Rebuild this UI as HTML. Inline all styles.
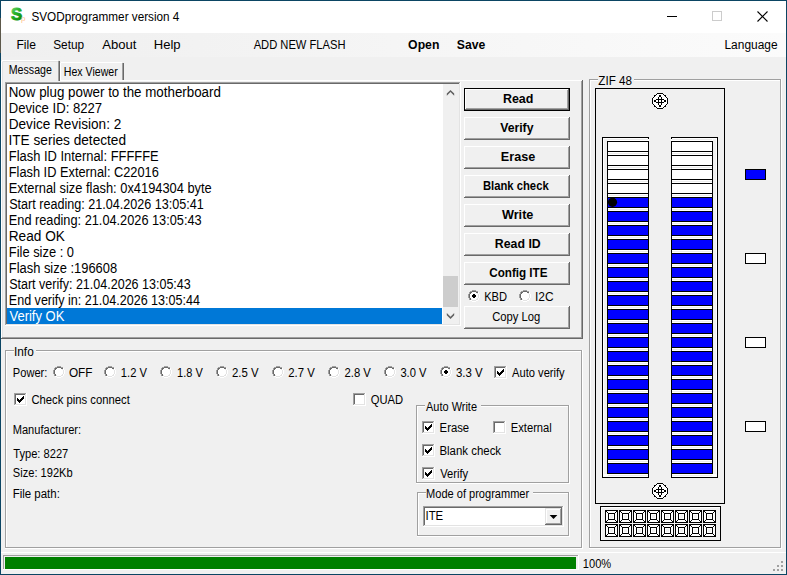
<!DOCTYPE html>
<html><head><meta charset="utf-8"><title>SVODprogrammer version 4</title>
<style>
html,body{margin:0;padding:0;background:#f0f0f0;overflow:hidden;}
svg{display:block;}
text{font-family:"Liberation Sans", sans-serif;}
</style></head><body>
<svg width="787" height="575" viewBox="0 0 787 575" shape-rendering="crispEdges">
<rect x="0" y="0" width="787" height="575" fill="#f0f0f0"/>
<rect x="1" y="1" width="785" height="32" fill="#ffffff"/>
<defs><linearGradient id="mb" x1="0" x2="1" y1="0" y2="0"><stop offset="0" stop-color="#efefef"/><stop offset="1" stop-color="#fbfbfb"/></linearGradient><linearGradient id="sg" x1="0" x2="0.6" y1="0" y2="1"><stop offset="0" stop-color="#8fe08f"/><stop offset="0.45" stop-color="#2cb52c"/><stop offset="1" stop-color="#0a8a0a"/></linearGradient></defs>
<rect x="1" y="33" width="785" height="24" fill="url(#mb)"/>
<rect x="0" y="0" width="787" height="1" fill="#0b4563"/>
<rect x="0" y="574" width="787" height="1" fill="#0b4563"/>
<rect x="786" y="0" width="1" height="575" fill="#0b4563"/>
<rect x="0" y="0" width="1" height="575" fill="#0b4563"/>
<rect x="0" y="18" width="1" height="35" fill="#5c584a"/>
<text x="11" y="20.2" font-size="16.5" font-weight="bold" textLength="11.2" lengthAdjust="spacingAndGlyphs" fill="url(#sg)" stroke="url(#sg)" stroke-width="0.9">S</text>
<text x="21" y="21" font-size="8" fill="#ffc48a">p</text>
<rect x="667" y="16" width="10" height="1" fill="#000"/>
<rect x="712.5" y="11.5" width="9" height="9" fill="none" stroke="#cccccc" stroke-width="1"/>
<path d="M757.5 11.5 L767.5 21.5 M767.5 11.5 L757.5 21.5" stroke="#000" stroke-width="1.1" fill="none" shape-rendering="geometricPrecision"/>
<rect x="60" y="80" width="522" height="1" fill="#ffffff"/>
<rect x="1" y="61" width="1" height="277" fill="#ffffff"/>
<rect x="2" y="62" width="1" height="275" fill="#e3e3e3"/>
<rect x="582" y="80" width="1" height="259" fill="#696969"/>
<rect x="581" y="81" width="1" height="257" fill="#a0a0a0"/>
<rect x="1" y="338" width="582" height="1" fill="#696969"/>
<rect x="2" y="337" width="580" height="1" fill="#a0a0a0"/>
<rect x="2" y="60" width="56" height="1" fill="#ffffff"/>
<rect x="3" y="61" width="55" height="1" fill="#e3e3e3"/>
<rect x="59" y="61" width="1" height="20" fill="#696969"/>
<rect x="58" y="61" width="1" height="20" fill="#a0a0a0"/>
<rect x="61" y="62" width="61" height="1" fill="#ffffff"/>
<rect x="60" y="63" width="1" height="17" fill="#ffffff"/>
<rect x="123" y="63" width="1" height="17" fill="#696969"/>
<rect x="122" y="63" width="1" height="17" fill="#a0a0a0"/>
<rect x="5" y="82" width="455" height="1" fill="#a0a0a0"/>
<rect x="5" y="82" width="1" height="243" fill="#a0a0a0"/>
<rect x="6" y="83" width="453" height="1" fill="#696969"/>
<rect x="6" y="83" width="1" height="241" fill="#696969"/>
<rect x="5" y="325" width="456" height="1" fill="#ffffff"/>
<rect x="460" y="82" width="1" height="244" fill="#ffffff"/>
<rect x="6" y="324" width="454" height="1" fill="#e3e3e3"/>
<rect x="459" y="83" width="1" height="242" fill="#e3e3e3"/>
<rect x="7" y="84" width="452" height="240" fill="#ffffff"/>
<rect x="443" y="84" width="16" height="240" fill="#f0f0f0"/>
<rect x="443" y="276" width="15" height="31" fill="#cdcdcd"/>
<path d="M446.8 93.6 L450.5 89.9 L454.2 93.6 L454.2 95.8 L450.5 92.1 L446.8 95.8 Z" fill="#606060" shape-rendering="geometricPrecision"/>
<path d="M446.8 313 L450.5 316.7 L454.2 313 L454.2 315.2 L450.5 318.9 L446.8 315.2 Z" fill="#606060" shape-rendering="geometricPrecision"/>
<rect x="7" y="308" width="435" height="16" fill="#0078d7"/>
<rect x="464" y="88" width="106" height="23" fill="#f0f0f0"/>
<rect x="464" y="88" width="106" height="1" fill="#000"/>
<rect x="464" y="110" width="106" height="1" fill="#000"/>
<rect x="464" y="88" width="1" height="23" fill="#000"/>
<rect x="569" y="88" width="1" height="23" fill="#000"/>
<rect x="465" y="89" width="103" height="1" fill="#ffffff"/>
<rect x="465" y="89" width="1" height="20" fill="#ffffff"/>
<rect x="466" y="90" width="101" height="1" fill="#f0f0f0"/>
<rect x="466" y="90" width="1" height="18" fill="#f0f0f0"/>
<rect x="465" y="109" width="104" height="1" fill="#696969"/>
<rect x="568" y="89" width="1" height="21" fill="#696969"/>
<rect x="466" y="108" width="102" height="1" fill="#a0a0a0"/>
<rect x="567" y="90" width="1" height="19" fill="#a0a0a0"/>
<rect x="464" y="117" width="106" height="23" fill="#f0f0f0"/>
<rect x="464" y="117" width="105" height="1" fill="#ffffff"/>
<rect x="464" y="117" width="1" height="22" fill="#ffffff"/>
<rect x="465" y="118" width="103" height="1" fill="#f0f0f0"/>
<rect x="465" y="118" width="1" height="20" fill="#f0f0f0"/>
<rect x="464" y="139" width="106" height="1" fill="#696969"/>
<rect x="569" y="117" width="1" height="23" fill="#696969"/>
<rect x="465" y="138" width="104" height="1" fill="#a0a0a0"/>
<rect x="568" y="118" width="1" height="21" fill="#a0a0a0"/>
<rect x="464" y="146" width="106" height="23" fill="#f0f0f0"/>
<rect x="464" y="146" width="105" height="1" fill="#ffffff"/>
<rect x="464" y="146" width="1" height="22" fill="#ffffff"/>
<rect x="465" y="147" width="103" height="1" fill="#f0f0f0"/>
<rect x="465" y="147" width="1" height="20" fill="#f0f0f0"/>
<rect x="464" y="168" width="106" height="1" fill="#696969"/>
<rect x="569" y="146" width="1" height="23" fill="#696969"/>
<rect x="465" y="167" width="104" height="1" fill="#a0a0a0"/>
<rect x="568" y="147" width="1" height="21" fill="#a0a0a0"/>
<rect x="464" y="175" width="106" height="23" fill="#f0f0f0"/>
<rect x="464" y="175" width="105" height="1" fill="#ffffff"/>
<rect x="464" y="175" width="1" height="22" fill="#ffffff"/>
<rect x="465" y="176" width="103" height="1" fill="#f0f0f0"/>
<rect x="465" y="176" width="1" height="20" fill="#f0f0f0"/>
<rect x="464" y="197" width="106" height="1" fill="#696969"/>
<rect x="569" y="175" width="1" height="23" fill="#696969"/>
<rect x="465" y="196" width="104" height="1" fill="#a0a0a0"/>
<rect x="568" y="176" width="1" height="21" fill="#a0a0a0"/>
<rect x="464" y="204" width="106" height="23" fill="#f0f0f0"/>
<rect x="464" y="204" width="105" height="1" fill="#ffffff"/>
<rect x="464" y="204" width="1" height="22" fill="#ffffff"/>
<rect x="465" y="205" width="103" height="1" fill="#f0f0f0"/>
<rect x="465" y="205" width="1" height="20" fill="#f0f0f0"/>
<rect x="464" y="226" width="106" height="1" fill="#696969"/>
<rect x="569" y="204" width="1" height="23" fill="#696969"/>
<rect x="465" y="225" width="104" height="1" fill="#a0a0a0"/>
<rect x="568" y="205" width="1" height="21" fill="#a0a0a0"/>
<rect x="464" y="233" width="106" height="23" fill="#f0f0f0"/>
<rect x="464" y="233" width="105" height="1" fill="#ffffff"/>
<rect x="464" y="233" width="1" height="22" fill="#ffffff"/>
<rect x="465" y="234" width="103" height="1" fill="#f0f0f0"/>
<rect x="465" y="234" width="1" height="20" fill="#f0f0f0"/>
<rect x="464" y="255" width="106" height="1" fill="#696969"/>
<rect x="569" y="233" width="1" height="23" fill="#696969"/>
<rect x="465" y="254" width="104" height="1" fill="#a0a0a0"/>
<rect x="568" y="234" width="1" height="21" fill="#a0a0a0"/>
<rect x="464" y="262" width="106" height="23" fill="#f0f0f0"/>
<rect x="464" y="262" width="105" height="1" fill="#ffffff"/>
<rect x="464" y="262" width="1" height="22" fill="#ffffff"/>
<rect x="465" y="263" width="103" height="1" fill="#f0f0f0"/>
<rect x="465" y="263" width="1" height="20" fill="#f0f0f0"/>
<rect x="464" y="284" width="106" height="1" fill="#696969"/>
<rect x="569" y="262" width="1" height="23" fill="#696969"/>
<rect x="465" y="283" width="104" height="1" fill="#a0a0a0"/>
<rect x="568" y="263" width="1" height="21" fill="#a0a0a0"/>
<g transform="translate(468,290)">
<rect x="4" y="0" width="1" height="1" fill="#a0a0a0"/>
<rect x="5" y="0" width="1" height="1" fill="#a0a0a0"/>
<rect x="6" y="0" width="1" height="1" fill="#a0a0a0"/>
<rect x="7" y="0" width="1" height="1" fill="#a0a0a0"/>
<rect x="2" y="1" width="1" height="1" fill="#a0a0a0"/>
<rect x="3" y="1" width="1" height="1" fill="#a0a0a0"/>
<rect x="8" y="1" width="1" height="1" fill="#a0a0a0"/>
<rect x="9" y="1" width="1" height="1" fill="#a0a0a0"/>
<rect x="1" y="2" width="1" height="1" fill="#a0a0a0"/>
<rect x="1" y="3" width="1" height="1" fill="#a0a0a0"/>
<rect x="0" y="4" width="1" height="1" fill="#a0a0a0"/>
<rect x="0" y="5" width="1" height="1" fill="#a0a0a0"/>
<rect x="0" y="6" width="1" height="1" fill="#a0a0a0"/>
<rect x="0" y="7" width="1" height="1" fill="#a0a0a0"/>
<rect x="1" y="8" width="1" height="1" fill="#a0a0a0"/>
<rect x="1" y="9" width="1" height="1" fill="#a0a0a0"/>
<rect x="10" y="2" width="1" height="1" fill="#ffffff"/>
<rect x="10" y="3" width="1" height="1" fill="#ffffff"/>
<rect x="11" y="4" width="1" height="1" fill="#ffffff"/>
<rect x="11" y="5" width="1" height="1" fill="#ffffff"/>
<rect x="11" y="6" width="1" height="1" fill="#ffffff"/>
<rect x="11" y="7" width="1" height="1" fill="#ffffff"/>
<rect x="10" y="8" width="1" height="1" fill="#ffffff"/>
<rect x="10" y="9" width="1" height="1" fill="#ffffff"/>
<rect x="2" y="10" width="1" height="1" fill="#ffffff"/>
<rect x="3" y="10" width="1" height="1" fill="#ffffff"/>
<rect x="8" y="10" width="1" height="1" fill="#ffffff"/>
<rect x="9" y="10" width="1" height="1" fill="#ffffff"/>
<rect x="4" y="11" width="1" height="1" fill="#ffffff"/>
<rect x="5" y="11" width="1" height="1" fill="#ffffff"/>
<rect x="6" y="11" width="1" height="1" fill="#ffffff"/>
<rect x="7" y="11" width="1" height="1" fill="#ffffff"/>
<rect x="4" y="1" width="1" height="1" fill="#696969"/>
<rect x="5" y="1" width="1" height="1" fill="#696969"/>
<rect x="6" y="1" width="1" height="1" fill="#696969"/>
<rect x="7" y="1" width="1" height="1" fill="#696969"/>
<rect x="2" y="2" width="1" height="1" fill="#696969"/>
<rect x="3" y="2" width="1" height="1" fill="#696969"/>
<rect x="8" y="2" width="1" height="1" fill="#696969"/>
<rect x="9" y="2" width="1" height="1" fill="#696969"/>
<rect x="2" y="3" width="1" height="1" fill="#696969"/>
<rect x="1" y="4" width="1" height="1" fill="#696969"/>
<rect x="1" y="5" width="1" height="1" fill="#696969"/>
<rect x="1" y="6" width="1" height="1" fill="#696969"/>
<rect x="1" y="7" width="1" height="1" fill="#696969"/>
<rect x="2" y="8" width="1" height="1" fill="#696969"/>
<rect x="2" y="9" width="1" height="1" fill="#696969"/>
<rect x="9" y="3" width="1" height="1" fill="#e3e3e3"/>
<rect x="10" y="4" width="1" height="1" fill="#e3e3e3"/>
<rect x="10" y="5" width="1" height="1" fill="#e3e3e3"/>
<rect x="10" y="6" width="1" height="1" fill="#e3e3e3"/>
<rect x="10" y="7" width="1" height="1" fill="#e3e3e3"/>
<rect x="9" y="8" width="1" height="1" fill="#e3e3e3"/>
<rect x="9" y="9" width="1" height="1" fill="#e3e3e3"/>
<rect x="8" y="9" width="1" height="1" fill="#e3e3e3"/>
<rect x="3" y="9" width="1" height="1" fill="#e3e3e3"/>
<rect x="4" y="10" width="1" height="1" fill="#e3e3e3"/>
<rect x="5" y="10" width="1" height="1" fill="#e3e3e3"/>
<rect x="6" y="10" width="1" height="1" fill="#e3e3e3"/>
<rect x="7" y="10" width="1" height="1" fill="#e3e3e3"/>
<rect x="3" y="3" width="6" height="6" fill="#ffffff"/>
<rect x="2" y="4" width="8" height="4" fill="#ffffff"/>
<rect x="4" y="2" width="4" height="8" fill="#ffffff"/>
<rect x="5" y="4" width="2" height="4" fill="#000"/><rect x="4" y="5" width="4" height="2" fill="#000"/>
</g>
<g transform="translate(519,290)">
<rect x="4" y="0" width="1" height="1" fill="#a0a0a0"/>
<rect x="5" y="0" width="1" height="1" fill="#a0a0a0"/>
<rect x="6" y="0" width="1" height="1" fill="#a0a0a0"/>
<rect x="7" y="0" width="1" height="1" fill="#a0a0a0"/>
<rect x="2" y="1" width="1" height="1" fill="#a0a0a0"/>
<rect x="3" y="1" width="1" height="1" fill="#a0a0a0"/>
<rect x="8" y="1" width="1" height="1" fill="#a0a0a0"/>
<rect x="9" y="1" width="1" height="1" fill="#a0a0a0"/>
<rect x="1" y="2" width="1" height="1" fill="#a0a0a0"/>
<rect x="1" y="3" width="1" height="1" fill="#a0a0a0"/>
<rect x="0" y="4" width="1" height="1" fill="#a0a0a0"/>
<rect x="0" y="5" width="1" height="1" fill="#a0a0a0"/>
<rect x="0" y="6" width="1" height="1" fill="#a0a0a0"/>
<rect x="0" y="7" width="1" height="1" fill="#a0a0a0"/>
<rect x="1" y="8" width="1" height="1" fill="#a0a0a0"/>
<rect x="1" y="9" width="1" height="1" fill="#a0a0a0"/>
<rect x="10" y="2" width="1" height="1" fill="#ffffff"/>
<rect x="10" y="3" width="1" height="1" fill="#ffffff"/>
<rect x="11" y="4" width="1" height="1" fill="#ffffff"/>
<rect x="11" y="5" width="1" height="1" fill="#ffffff"/>
<rect x="11" y="6" width="1" height="1" fill="#ffffff"/>
<rect x="11" y="7" width="1" height="1" fill="#ffffff"/>
<rect x="10" y="8" width="1" height="1" fill="#ffffff"/>
<rect x="10" y="9" width="1" height="1" fill="#ffffff"/>
<rect x="2" y="10" width="1" height="1" fill="#ffffff"/>
<rect x="3" y="10" width="1" height="1" fill="#ffffff"/>
<rect x="8" y="10" width="1" height="1" fill="#ffffff"/>
<rect x="9" y="10" width="1" height="1" fill="#ffffff"/>
<rect x="4" y="11" width="1" height="1" fill="#ffffff"/>
<rect x="5" y="11" width="1" height="1" fill="#ffffff"/>
<rect x="6" y="11" width="1" height="1" fill="#ffffff"/>
<rect x="7" y="11" width="1" height="1" fill="#ffffff"/>
<rect x="4" y="1" width="1" height="1" fill="#696969"/>
<rect x="5" y="1" width="1" height="1" fill="#696969"/>
<rect x="6" y="1" width="1" height="1" fill="#696969"/>
<rect x="7" y="1" width="1" height="1" fill="#696969"/>
<rect x="2" y="2" width="1" height="1" fill="#696969"/>
<rect x="3" y="2" width="1" height="1" fill="#696969"/>
<rect x="8" y="2" width="1" height="1" fill="#696969"/>
<rect x="9" y="2" width="1" height="1" fill="#696969"/>
<rect x="2" y="3" width="1" height="1" fill="#696969"/>
<rect x="1" y="4" width="1" height="1" fill="#696969"/>
<rect x="1" y="5" width="1" height="1" fill="#696969"/>
<rect x="1" y="6" width="1" height="1" fill="#696969"/>
<rect x="1" y="7" width="1" height="1" fill="#696969"/>
<rect x="2" y="8" width="1" height="1" fill="#696969"/>
<rect x="2" y="9" width="1" height="1" fill="#696969"/>
<rect x="9" y="3" width="1" height="1" fill="#e3e3e3"/>
<rect x="10" y="4" width="1" height="1" fill="#e3e3e3"/>
<rect x="10" y="5" width="1" height="1" fill="#e3e3e3"/>
<rect x="10" y="6" width="1" height="1" fill="#e3e3e3"/>
<rect x="10" y="7" width="1" height="1" fill="#e3e3e3"/>
<rect x="9" y="8" width="1" height="1" fill="#e3e3e3"/>
<rect x="9" y="9" width="1" height="1" fill="#e3e3e3"/>
<rect x="8" y="9" width="1" height="1" fill="#e3e3e3"/>
<rect x="3" y="9" width="1" height="1" fill="#e3e3e3"/>
<rect x="4" y="10" width="1" height="1" fill="#e3e3e3"/>
<rect x="5" y="10" width="1" height="1" fill="#e3e3e3"/>
<rect x="6" y="10" width="1" height="1" fill="#e3e3e3"/>
<rect x="7" y="10" width="1" height="1" fill="#e3e3e3"/>
<rect x="3" y="3" width="6" height="6" fill="#ffffff"/>
<rect x="2" y="4" width="8" height="4" fill="#ffffff"/>
<rect x="4" y="2" width="4" height="8" fill="#ffffff"/>
</g>
<rect x="464" y="306" width="106" height="23" fill="#f0f0f0"/>
<rect x="464" y="306" width="105" height="1" fill="#ffffff"/>
<rect x="464" y="306" width="1" height="22" fill="#ffffff"/>
<rect x="465" y="307" width="103" height="1" fill="#f0f0f0"/>
<rect x="465" y="307" width="1" height="20" fill="#f0f0f0"/>
<rect x="464" y="328" width="106" height="1" fill="#696969"/>
<rect x="569" y="306" width="1" height="23" fill="#696969"/>
<rect x="465" y="327" width="104" height="1" fill="#a0a0a0"/>
<rect x="568" y="307" width="1" height="21" fill="#a0a0a0"/>
<rect x="5" y="350" width="9" height="1" fill="#a0a0a0"/>
<rect x="36" y="350" width="546" height="1" fill="#a0a0a0"/>
<rect x="6" y="351" width="8" height="1" fill="#ffffff"/>
<rect x="36" y="351" width="545" height="1" fill="#ffffff"/>
<rect x="5" y="350" width="1" height="198" fill="#a0a0a0"/>
<rect x="6" y="351" width="1" height="196" fill="#ffffff"/>
<rect x="581" y="350" width="1" height="198" fill="#a0a0a0"/>
<rect x="582" y="350" width="1" height="199" fill="#ffffff"/>
<rect x="5" y="547" width="577" height="1" fill="#a0a0a0"/>
<rect x="5" y="548" width="578" height="1" fill="#ffffff"/>
<g transform="translate(53,366)">
<rect x="4" y="0" width="1" height="1" fill="#a0a0a0"/>
<rect x="5" y="0" width="1" height="1" fill="#a0a0a0"/>
<rect x="6" y="0" width="1" height="1" fill="#a0a0a0"/>
<rect x="7" y="0" width="1" height="1" fill="#a0a0a0"/>
<rect x="2" y="1" width="1" height="1" fill="#a0a0a0"/>
<rect x="3" y="1" width="1" height="1" fill="#a0a0a0"/>
<rect x="8" y="1" width="1" height="1" fill="#a0a0a0"/>
<rect x="9" y="1" width="1" height="1" fill="#a0a0a0"/>
<rect x="1" y="2" width="1" height="1" fill="#a0a0a0"/>
<rect x="1" y="3" width="1" height="1" fill="#a0a0a0"/>
<rect x="0" y="4" width="1" height="1" fill="#a0a0a0"/>
<rect x="0" y="5" width="1" height="1" fill="#a0a0a0"/>
<rect x="0" y="6" width="1" height="1" fill="#a0a0a0"/>
<rect x="0" y="7" width="1" height="1" fill="#a0a0a0"/>
<rect x="1" y="8" width="1" height="1" fill="#a0a0a0"/>
<rect x="1" y="9" width="1" height="1" fill="#a0a0a0"/>
<rect x="10" y="2" width="1" height="1" fill="#ffffff"/>
<rect x="10" y="3" width="1" height="1" fill="#ffffff"/>
<rect x="11" y="4" width="1" height="1" fill="#ffffff"/>
<rect x="11" y="5" width="1" height="1" fill="#ffffff"/>
<rect x="11" y="6" width="1" height="1" fill="#ffffff"/>
<rect x="11" y="7" width="1" height="1" fill="#ffffff"/>
<rect x="10" y="8" width="1" height="1" fill="#ffffff"/>
<rect x="10" y="9" width="1" height="1" fill="#ffffff"/>
<rect x="2" y="10" width="1" height="1" fill="#ffffff"/>
<rect x="3" y="10" width="1" height="1" fill="#ffffff"/>
<rect x="8" y="10" width="1" height="1" fill="#ffffff"/>
<rect x="9" y="10" width="1" height="1" fill="#ffffff"/>
<rect x="4" y="11" width="1" height="1" fill="#ffffff"/>
<rect x="5" y="11" width="1" height="1" fill="#ffffff"/>
<rect x="6" y="11" width="1" height="1" fill="#ffffff"/>
<rect x="7" y="11" width="1" height="1" fill="#ffffff"/>
<rect x="4" y="1" width="1" height="1" fill="#696969"/>
<rect x="5" y="1" width="1" height="1" fill="#696969"/>
<rect x="6" y="1" width="1" height="1" fill="#696969"/>
<rect x="7" y="1" width="1" height="1" fill="#696969"/>
<rect x="2" y="2" width="1" height="1" fill="#696969"/>
<rect x="3" y="2" width="1" height="1" fill="#696969"/>
<rect x="8" y="2" width="1" height="1" fill="#696969"/>
<rect x="9" y="2" width="1" height="1" fill="#696969"/>
<rect x="2" y="3" width="1" height="1" fill="#696969"/>
<rect x="1" y="4" width="1" height="1" fill="#696969"/>
<rect x="1" y="5" width="1" height="1" fill="#696969"/>
<rect x="1" y="6" width="1" height="1" fill="#696969"/>
<rect x="1" y="7" width="1" height="1" fill="#696969"/>
<rect x="2" y="8" width="1" height="1" fill="#696969"/>
<rect x="2" y="9" width="1" height="1" fill="#696969"/>
<rect x="9" y="3" width="1" height="1" fill="#e3e3e3"/>
<rect x="10" y="4" width="1" height="1" fill="#e3e3e3"/>
<rect x="10" y="5" width="1" height="1" fill="#e3e3e3"/>
<rect x="10" y="6" width="1" height="1" fill="#e3e3e3"/>
<rect x="10" y="7" width="1" height="1" fill="#e3e3e3"/>
<rect x="9" y="8" width="1" height="1" fill="#e3e3e3"/>
<rect x="9" y="9" width="1" height="1" fill="#e3e3e3"/>
<rect x="8" y="9" width="1" height="1" fill="#e3e3e3"/>
<rect x="3" y="9" width="1" height="1" fill="#e3e3e3"/>
<rect x="4" y="10" width="1" height="1" fill="#e3e3e3"/>
<rect x="5" y="10" width="1" height="1" fill="#e3e3e3"/>
<rect x="6" y="10" width="1" height="1" fill="#e3e3e3"/>
<rect x="7" y="10" width="1" height="1" fill="#e3e3e3"/>
<rect x="3" y="3" width="6" height="6" fill="#ffffff"/>
<rect x="2" y="4" width="8" height="4" fill="#ffffff"/>
<rect x="4" y="2" width="4" height="8" fill="#ffffff"/>
</g>
<g transform="translate(104,366)">
<rect x="4" y="0" width="1" height="1" fill="#a0a0a0"/>
<rect x="5" y="0" width="1" height="1" fill="#a0a0a0"/>
<rect x="6" y="0" width="1" height="1" fill="#a0a0a0"/>
<rect x="7" y="0" width="1" height="1" fill="#a0a0a0"/>
<rect x="2" y="1" width="1" height="1" fill="#a0a0a0"/>
<rect x="3" y="1" width="1" height="1" fill="#a0a0a0"/>
<rect x="8" y="1" width="1" height="1" fill="#a0a0a0"/>
<rect x="9" y="1" width="1" height="1" fill="#a0a0a0"/>
<rect x="1" y="2" width="1" height="1" fill="#a0a0a0"/>
<rect x="1" y="3" width="1" height="1" fill="#a0a0a0"/>
<rect x="0" y="4" width="1" height="1" fill="#a0a0a0"/>
<rect x="0" y="5" width="1" height="1" fill="#a0a0a0"/>
<rect x="0" y="6" width="1" height="1" fill="#a0a0a0"/>
<rect x="0" y="7" width="1" height="1" fill="#a0a0a0"/>
<rect x="1" y="8" width="1" height="1" fill="#a0a0a0"/>
<rect x="1" y="9" width="1" height="1" fill="#a0a0a0"/>
<rect x="10" y="2" width="1" height="1" fill="#ffffff"/>
<rect x="10" y="3" width="1" height="1" fill="#ffffff"/>
<rect x="11" y="4" width="1" height="1" fill="#ffffff"/>
<rect x="11" y="5" width="1" height="1" fill="#ffffff"/>
<rect x="11" y="6" width="1" height="1" fill="#ffffff"/>
<rect x="11" y="7" width="1" height="1" fill="#ffffff"/>
<rect x="10" y="8" width="1" height="1" fill="#ffffff"/>
<rect x="10" y="9" width="1" height="1" fill="#ffffff"/>
<rect x="2" y="10" width="1" height="1" fill="#ffffff"/>
<rect x="3" y="10" width="1" height="1" fill="#ffffff"/>
<rect x="8" y="10" width="1" height="1" fill="#ffffff"/>
<rect x="9" y="10" width="1" height="1" fill="#ffffff"/>
<rect x="4" y="11" width="1" height="1" fill="#ffffff"/>
<rect x="5" y="11" width="1" height="1" fill="#ffffff"/>
<rect x="6" y="11" width="1" height="1" fill="#ffffff"/>
<rect x="7" y="11" width="1" height="1" fill="#ffffff"/>
<rect x="4" y="1" width="1" height="1" fill="#696969"/>
<rect x="5" y="1" width="1" height="1" fill="#696969"/>
<rect x="6" y="1" width="1" height="1" fill="#696969"/>
<rect x="7" y="1" width="1" height="1" fill="#696969"/>
<rect x="2" y="2" width="1" height="1" fill="#696969"/>
<rect x="3" y="2" width="1" height="1" fill="#696969"/>
<rect x="8" y="2" width="1" height="1" fill="#696969"/>
<rect x="9" y="2" width="1" height="1" fill="#696969"/>
<rect x="2" y="3" width="1" height="1" fill="#696969"/>
<rect x="1" y="4" width="1" height="1" fill="#696969"/>
<rect x="1" y="5" width="1" height="1" fill="#696969"/>
<rect x="1" y="6" width="1" height="1" fill="#696969"/>
<rect x="1" y="7" width="1" height="1" fill="#696969"/>
<rect x="2" y="8" width="1" height="1" fill="#696969"/>
<rect x="2" y="9" width="1" height="1" fill="#696969"/>
<rect x="9" y="3" width="1" height="1" fill="#e3e3e3"/>
<rect x="10" y="4" width="1" height="1" fill="#e3e3e3"/>
<rect x="10" y="5" width="1" height="1" fill="#e3e3e3"/>
<rect x="10" y="6" width="1" height="1" fill="#e3e3e3"/>
<rect x="10" y="7" width="1" height="1" fill="#e3e3e3"/>
<rect x="9" y="8" width="1" height="1" fill="#e3e3e3"/>
<rect x="9" y="9" width="1" height="1" fill="#e3e3e3"/>
<rect x="8" y="9" width="1" height="1" fill="#e3e3e3"/>
<rect x="3" y="9" width="1" height="1" fill="#e3e3e3"/>
<rect x="4" y="10" width="1" height="1" fill="#e3e3e3"/>
<rect x="5" y="10" width="1" height="1" fill="#e3e3e3"/>
<rect x="6" y="10" width="1" height="1" fill="#e3e3e3"/>
<rect x="7" y="10" width="1" height="1" fill="#e3e3e3"/>
<rect x="3" y="3" width="6" height="6" fill="#ffffff"/>
<rect x="2" y="4" width="8" height="4" fill="#ffffff"/>
<rect x="4" y="2" width="4" height="8" fill="#ffffff"/>
</g>
<g transform="translate(160,366)">
<rect x="4" y="0" width="1" height="1" fill="#a0a0a0"/>
<rect x="5" y="0" width="1" height="1" fill="#a0a0a0"/>
<rect x="6" y="0" width="1" height="1" fill="#a0a0a0"/>
<rect x="7" y="0" width="1" height="1" fill="#a0a0a0"/>
<rect x="2" y="1" width="1" height="1" fill="#a0a0a0"/>
<rect x="3" y="1" width="1" height="1" fill="#a0a0a0"/>
<rect x="8" y="1" width="1" height="1" fill="#a0a0a0"/>
<rect x="9" y="1" width="1" height="1" fill="#a0a0a0"/>
<rect x="1" y="2" width="1" height="1" fill="#a0a0a0"/>
<rect x="1" y="3" width="1" height="1" fill="#a0a0a0"/>
<rect x="0" y="4" width="1" height="1" fill="#a0a0a0"/>
<rect x="0" y="5" width="1" height="1" fill="#a0a0a0"/>
<rect x="0" y="6" width="1" height="1" fill="#a0a0a0"/>
<rect x="0" y="7" width="1" height="1" fill="#a0a0a0"/>
<rect x="1" y="8" width="1" height="1" fill="#a0a0a0"/>
<rect x="1" y="9" width="1" height="1" fill="#a0a0a0"/>
<rect x="10" y="2" width="1" height="1" fill="#ffffff"/>
<rect x="10" y="3" width="1" height="1" fill="#ffffff"/>
<rect x="11" y="4" width="1" height="1" fill="#ffffff"/>
<rect x="11" y="5" width="1" height="1" fill="#ffffff"/>
<rect x="11" y="6" width="1" height="1" fill="#ffffff"/>
<rect x="11" y="7" width="1" height="1" fill="#ffffff"/>
<rect x="10" y="8" width="1" height="1" fill="#ffffff"/>
<rect x="10" y="9" width="1" height="1" fill="#ffffff"/>
<rect x="2" y="10" width="1" height="1" fill="#ffffff"/>
<rect x="3" y="10" width="1" height="1" fill="#ffffff"/>
<rect x="8" y="10" width="1" height="1" fill="#ffffff"/>
<rect x="9" y="10" width="1" height="1" fill="#ffffff"/>
<rect x="4" y="11" width="1" height="1" fill="#ffffff"/>
<rect x="5" y="11" width="1" height="1" fill="#ffffff"/>
<rect x="6" y="11" width="1" height="1" fill="#ffffff"/>
<rect x="7" y="11" width="1" height="1" fill="#ffffff"/>
<rect x="4" y="1" width="1" height="1" fill="#696969"/>
<rect x="5" y="1" width="1" height="1" fill="#696969"/>
<rect x="6" y="1" width="1" height="1" fill="#696969"/>
<rect x="7" y="1" width="1" height="1" fill="#696969"/>
<rect x="2" y="2" width="1" height="1" fill="#696969"/>
<rect x="3" y="2" width="1" height="1" fill="#696969"/>
<rect x="8" y="2" width="1" height="1" fill="#696969"/>
<rect x="9" y="2" width="1" height="1" fill="#696969"/>
<rect x="2" y="3" width="1" height="1" fill="#696969"/>
<rect x="1" y="4" width="1" height="1" fill="#696969"/>
<rect x="1" y="5" width="1" height="1" fill="#696969"/>
<rect x="1" y="6" width="1" height="1" fill="#696969"/>
<rect x="1" y="7" width="1" height="1" fill="#696969"/>
<rect x="2" y="8" width="1" height="1" fill="#696969"/>
<rect x="2" y="9" width="1" height="1" fill="#696969"/>
<rect x="9" y="3" width="1" height="1" fill="#e3e3e3"/>
<rect x="10" y="4" width="1" height="1" fill="#e3e3e3"/>
<rect x="10" y="5" width="1" height="1" fill="#e3e3e3"/>
<rect x="10" y="6" width="1" height="1" fill="#e3e3e3"/>
<rect x="10" y="7" width="1" height="1" fill="#e3e3e3"/>
<rect x="9" y="8" width="1" height="1" fill="#e3e3e3"/>
<rect x="9" y="9" width="1" height="1" fill="#e3e3e3"/>
<rect x="8" y="9" width="1" height="1" fill="#e3e3e3"/>
<rect x="3" y="9" width="1" height="1" fill="#e3e3e3"/>
<rect x="4" y="10" width="1" height="1" fill="#e3e3e3"/>
<rect x="5" y="10" width="1" height="1" fill="#e3e3e3"/>
<rect x="6" y="10" width="1" height="1" fill="#e3e3e3"/>
<rect x="7" y="10" width="1" height="1" fill="#e3e3e3"/>
<rect x="3" y="3" width="6" height="6" fill="#ffffff"/>
<rect x="2" y="4" width="8" height="4" fill="#ffffff"/>
<rect x="4" y="2" width="4" height="8" fill="#ffffff"/>
</g>
<g transform="translate(216,366)">
<rect x="4" y="0" width="1" height="1" fill="#a0a0a0"/>
<rect x="5" y="0" width="1" height="1" fill="#a0a0a0"/>
<rect x="6" y="0" width="1" height="1" fill="#a0a0a0"/>
<rect x="7" y="0" width="1" height="1" fill="#a0a0a0"/>
<rect x="2" y="1" width="1" height="1" fill="#a0a0a0"/>
<rect x="3" y="1" width="1" height="1" fill="#a0a0a0"/>
<rect x="8" y="1" width="1" height="1" fill="#a0a0a0"/>
<rect x="9" y="1" width="1" height="1" fill="#a0a0a0"/>
<rect x="1" y="2" width="1" height="1" fill="#a0a0a0"/>
<rect x="1" y="3" width="1" height="1" fill="#a0a0a0"/>
<rect x="0" y="4" width="1" height="1" fill="#a0a0a0"/>
<rect x="0" y="5" width="1" height="1" fill="#a0a0a0"/>
<rect x="0" y="6" width="1" height="1" fill="#a0a0a0"/>
<rect x="0" y="7" width="1" height="1" fill="#a0a0a0"/>
<rect x="1" y="8" width="1" height="1" fill="#a0a0a0"/>
<rect x="1" y="9" width="1" height="1" fill="#a0a0a0"/>
<rect x="10" y="2" width="1" height="1" fill="#ffffff"/>
<rect x="10" y="3" width="1" height="1" fill="#ffffff"/>
<rect x="11" y="4" width="1" height="1" fill="#ffffff"/>
<rect x="11" y="5" width="1" height="1" fill="#ffffff"/>
<rect x="11" y="6" width="1" height="1" fill="#ffffff"/>
<rect x="11" y="7" width="1" height="1" fill="#ffffff"/>
<rect x="10" y="8" width="1" height="1" fill="#ffffff"/>
<rect x="10" y="9" width="1" height="1" fill="#ffffff"/>
<rect x="2" y="10" width="1" height="1" fill="#ffffff"/>
<rect x="3" y="10" width="1" height="1" fill="#ffffff"/>
<rect x="8" y="10" width="1" height="1" fill="#ffffff"/>
<rect x="9" y="10" width="1" height="1" fill="#ffffff"/>
<rect x="4" y="11" width="1" height="1" fill="#ffffff"/>
<rect x="5" y="11" width="1" height="1" fill="#ffffff"/>
<rect x="6" y="11" width="1" height="1" fill="#ffffff"/>
<rect x="7" y="11" width="1" height="1" fill="#ffffff"/>
<rect x="4" y="1" width="1" height="1" fill="#696969"/>
<rect x="5" y="1" width="1" height="1" fill="#696969"/>
<rect x="6" y="1" width="1" height="1" fill="#696969"/>
<rect x="7" y="1" width="1" height="1" fill="#696969"/>
<rect x="2" y="2" width="1" height="1" fill="#696969"/>
<rect x="3" y="2" width="1" height="1" fill="#696969"/>
<rect x="8" y="2" width="1" height="1" fill="#696969"/>
<rect x="9" y="2" width="1" height="1" fill="#696969"/>
<rect x="2" y="3" width="1" height="1" fill="#696969"/>
<rect x="1" y="4" width="1" height="1" fill="#696969"/>
<rect x="1" y="5" width="1" height="1" fill="#696969"/>
<rect x="1" y="6" width="1" height="1" fill="#696969"/>
<rect x="1" y="7" width="1" height="1" fill="#696969"/>
<rect x="2" y="8" width="1" height="1" fill="#696969"/>
<rect x="2" y="9" width="1" height="1" fill="#696969"/>
<rect x="9" y="3" width="1" height="1" fill="#e3e3e3"/>
<rect x="10" y="4" width="1" height="1" fill="#e3e3e3"/>
<rect x="10" y="5" width="1" height="1" fill="#e3e3e3"/>
<rect x="10" y="6" width="1" height="1" fill="#e3e3e3"/>
<rect x="10" y="7" width="1" height="1" fill="#e3e3e3"/>
<rect x="9" y="8" width="1" height="1" fill="#e3e3e3"/>
<rect x="9" y="9" width="1" height="1" fill="#e3e3e3"/>
<rect x="8" y="9" width="1" height="1" fill="#e3e3e3"/>
<rect x="3" y="9" width="1" height="1" fill="#e3e3e3"/>
<rect x="4" y="10" width="1" height="1" fill="#e3e3e3"/>
<rect x="5" y="10" width="1" height="1" fill="#e3e3e3"/>
<rect x="6" y="10" width="1" height="1" fill="#e3e3e3"/>
<rect x="7" y="10" width="1" height="1" fill="#e3e3e3"/>
<rect x="3" y="3" width="6" height="6" fill="#ffffff"/>
<rect x="2" y="4" width="8" height="4" fill="#ffffff"/>
<rect x="4" y="2" width="4" height="8" fill="#ffffff"/>
</g>
<g transform="translate(272,366)">
<rect x="4" y="0" width="1" height="1" fill="#a0a0a0"/>
<rect x="5" y="0" width="1" height="1" fill="#a0a0a0"/>
<rect x="6" y="0" width="1" height="1" fill="#a0a0a0"/>
<rect x="7" y="0" width="1" height="1" fill="#a0a0a0"/>
<rect x="2" y="1" width="1" height="1" fill="#a0a0a0"/>
<rect x="3" y="1" width="1" height="1" fill="#a0a0a0"/>
<rect x="8" y="1" width="1" height="1" fill="#a0a0a0"/>
<rect x="9" y="1" width="1" height="1" fill="#a0a0a0"/>
<rect x="1" y="2" width="1" height="1" fill="#a0a0a0"/>
<rect x="1" y="3" width="1" height="1" fill="#a0a0a0"/>
<rect x="0" y="4" width="1" height="1" fill="#a0a0a0"/>
<rect x="0" y="5" width="1" height="1" fill="#a0a0a0"/>
<rect x="0" y="6" width="1" height="1" fill="#a0a0a0"/>
<rect x="0" y="7" width="1" height="1" fill="#a0a0a0"/>
<rect x="1" y="8" width="1" height="1" fill="#a0a0a0"/>
<rect x="1" y="9" width="1" height="1" fill="#a0a0a0"/>
<rect x="10" y="2" width="1" height="1" fill="#ffffff"/>
<rect x="10" y="3" width="1" height="1" fill="#ffffff"/>
<rect x="11" y="4" width="1" height="1" fill="#ffffff"/>
<rect x="11" y="5" width="1" height="1" fill="#ffffff"/>
<rect x="11" y="6" width="1" height="1" fill="#ffffff"/>
<rect x="11" y="7" width="1" height="1" fill="#ffffff"/>
<rect x="10" y="8" width="1" height="1" fill="#ffffff"/>
<rect x="10" y="9" width="1" height="1" fill="#ffffff"/>
<rect x="2" y="10" width="1" height="1" fill="#ffffff"/>
<rect x="3" y="10" width="1" height="1" fill="#ffffff"/>
<rect x="8" y="10" width="1" height="1" fill="#ffffff"/>
<rect x="9" y="10" width="1" height="1" fill="#ffffff"/>
<rect x="4" y="11" width="1" height="1" fill="#ffffff"/>
<rect x="5" y="11" width="1" height="1" fill="#ffffff"/>
<rect x="6" y="11" width="1" height="1" fill="#ffffff"/>
<rect x="7" y="11" width="1" height="1" fill="#ffffff"/>
<rect x="4" y="1" width="1" height="1" fill="#696969"/>
<rect x="5" y="1" width="1" height="1" fill="#696969"/>
<rect x="6" y="1" width="1" height="1" fill="#696969"/>
<rect x="7" y="1" width="1" height="1" fill="#696969"/>
<rect x="2" y="2" width="1" height="1" fill="#696969"/>
<rect x="3" y="2" width="1" height="1" fill="#696969"/>
<rect x="8" y="2" width="1" height="1" fill="#696969"/>
<rect x="9" y="2" width="1" height="1" fill="#696969"/>
<rect x="2" y="3" width="1" height="1" fill="#696969"/>
<rect x="1" y="4" width="1" height="1" fill="#696969"/>
<rect x="1" y="5" width="1" height="1" fill="#696969"/>
<rect x="1" y="6" width="1" height="1" fill="#696969"/>
<rect x="1" y="7" width="1" height="1" fill="#696969"/>
<rect x="2" y="8" width="1" height="1" fill="#696969"/>
<rect x="2" y="9" width="1" height="1" fill="#696969"/>
<rect x="9" y="3" width="1" height="1" fill="#e3e3e3"/>
<rect x="10" y="4" width="1" height="1" fill="#e3e3e3"/>
<rect x="10" y="5" width="1" height="1" fill="#e3e3e3"/>
<rect x="10" y="6" width="1" height="1" fill="#e3e3e3"/>
<rect x="10" y="7" width="1" height="1" fill="#e3e3e3"/>
<rect x="9" y="8" width="1" height="1" fill="#e3e3e3"/>
<rect x="9" y="9" width="1" height="1" fill="#e3e3e3"/>
<rect x="8" y="9" width="1" height="1" fill="#e3e3e3"/>
<rect x="3" y="9" width="1" height="1" fill="#e3e3e3"/>
<rect x="4" y="10" width="1" height="1" fill="#e3e3e3"/>
<rect x="5" y="10" width="1" height="1" fill="#e3e3e3"/>
<rect x="6" y="10" width="1" height="1" fill="#e3e3e3"/>
<rect x="7" y="10" width="1" height="1" fill="#e3e3e3"/>
<rect x="3" y="3" width="6" height="6" fill="#ffffff"/>
<rect x="2" y="4" width="8" height="4" fill="#ffffff"/>
<rect x="4" y="2" width="4" height="8" fill="#ffffff"/>
</g>
<g transform="translate(328,366)">
<rect x="4" y="0" width="1" height="1" fill="#a0a0a0"/>
<rect x="5" y="0" width="1" height="1" fill="#a0a0a0"/>
<rect x="6" y="0" width="1" height="1" fill="#a0a0a0"/>
<rect x="7" y="0" width="1" height="1" fill="#a0a0a0"/>
<rect x="2" y="1" width="1" height="1" fill="#a0a0a0"/>
<rect x="3" y="1" width="1" height="1" fill="#a0a0a0"/>
<rect x="8" y="1" width="1" height="1" fill="#a0a0a0"/>
<rect x="9" y="1" width="1" height="1" fill="#a0a0a0"/>
<rect x="1" y="2" width="1" height="1" fill="#a0a0a0"/>
<rect x="1" y="3" width="1" height="1" fill="#a0a0a0"/>
<rect x="0" y="4" width="1" height="1" fill="#a0a0a0"/>
<rect x="0" y="5" width="1" height="1" fill="#a0a0a0"/>
<rect x="0" y="6" width="1" height="1" fill="#a0a0a0"/>
<rect x="0" y="7" width="1" height="1" fill="#a0a0a0"/>
<rect x="1" y="8" width="1" height="1" fill="#a0a0a0"/>
<rect x="1" y="9" width="1" height="1" fill="#a0a0a0"/>
<rect x="10" y="2" width="1" height="1" fill="#ffffff"/>
<rect x="10" y="3" width="1" height="1" fill="#ffffff"/>
<rect x="11" y="4" width="1" height="1" fill="#ffffff"/>
<rect x="11" y="5" width="1" height="1" fill="#ffffff"/>
<rect x="11" y="6" width="1" height="1" fill="#ffffff"/>
<rect x="11" y="7" width="1" height="1" fill="#ffffff"/>
<rect x="10" y="8" width="1" height="1" fill="#ffffff"/>
<rect x="10" y="9" width="1" height="1" fill="#ffffff"/>
<rect x="2" y="10" width="1" height="1" fill="#ffffff"/>
<rect x="3" y="10" width="1" height="1" fill="#ffffff"/>
<rect x="8" y="10" width="1" height="1" fill="#ffffff"/>
<rect x="9" y="10" width="1" height="1" fill="#ffffff"/>
<rect x="4" y="11" width="1" height="1" fill="#ffffff"/>
<rect x="5" y="11" width="1" height="1" fill="#ffffff"/>
<rect x="6" y="11" width="1" height="1" fill="#ffffff"/>
<rect x="7" y="11" width="1" height="1" fill="#ffffff"/>
<rect x="4" y="1" width="1" height="1" fill="#696969"/>
<rect x="5" y="1" width="1" height="1" fill="#696969"/>
<rect x="6" y="1" width="1" height="1" fill="#696969"/>
<rect x="7" y="1" width="1" height="1" fill="#696969"/>
<rect x="2" y="2" width="1" height="1" fill="#696969"/>
<rect x="3" y="2" width="1" height="1" fill="#696969"/>
<rect x="8" y="2" width="1" height="1" fill="#696969"/>
<rect x="9" y="2" width="1" height="1" fill="#696969"/>
<rect x="2" y="3" width="1" height="1" fill="#696969"/>
<rect x="1" y="4" width="1" height="1" fill="#696969"/>
<rect x="1" y="5" width="1" height="1" fill="#696969"/>
<rect x="1" y="6" width="1" height="1" fill="#696969"/>
<rect x="1" y="7" width="1" height="1" fill="#696969"/>
<rect x="2" y="8" width="1" height="1" fill="#696969"/>
<rect x="2" y="9" width="1" height="1" fill="#696969"/>
<rect x="9" y="3" width="1" height="1" fill="#e3e3e3"/>
<rect x="10" y="4" width="1" height="1" fill="#e3e3e3"/>
<rect x="10" y="5" width="1" height="1" fill="#e3e3e3"/>
<rect x="10" y="6" width="1" height="1" fill="#e3e3e3"/>
<rect x="10" y="7" width="1" height="1" fill="#e3e3e3"/>
<rect x="9" y="8" width="1" height="1" fill="#e3e3e3"/>
<rect x="9" y="9" width="1" height="1" fill="#e3e3e3"/>
<rect x="8" y="9" width="1" height="1" fill="#e3e3e3"/>
<rect x="3" y="9" width="1" height="1" fill="#e3e3e3"/>
<rect x="4" y="10" width="1" height="1" fill="#e3e3e3"/>
<rect x="5" y="10" width="1" height="1" fill="#e3e3e3"/>
<rect x="6" y="10" width="1" height="1" fill="#e3e3e3"/>
<rect x="7" y="10" width="1" height="1" fill="#e3e3e3"/>
<rect x="3" y="3" width="6" height="6" fill="#ffffff"/>
<rect x="2" y="4" width="8" height="4" fill="#ffffff"/>
<rect x="4" y="2" width="4" height="8" fill="#ffffff"/>
</g>
<g transform="translate(384,366)">
<rect x="4" y="0" width="1" height="1" fill="#a0a0a0"/>
<rect x="5" y="0" width="1" height="1" fill="#a0a0a0"/>
<rect x="6" y="0" width="1" height="1" fill="#a0a0a0"/>
<rect x="7" y="0" width="1" height="1" fill="#a0a0a0"/>
<rect x="2" y="1" width="1" height="1" fill="#a0a0a0"/>
<rect x="3" y="1" width="1" height="1" fill="#a0a0a0"/>
<rect x="8" y="1" width="1" height="1" fill="#a0a0a0"/>
<rect x="9" y="1" width="1" height="1" fill="#a0a0a0"/>
<rect x="1" y="2" width="1" height="1" fill="#a0a0a0"/>
<rect x="1" y="3" width="1" height="1" fill="#a0a0a0"/>
<rect x="0" y="4" width="1" height="1" fill="#a0a0a0"/>
<rect x="0" y="5" width="1" height="1" fill="#a0a0a0"/>
<rect x="0" y="6" width="1" height="1" fill="#a0a0a0"/>
<rect x="0" y="7" width="1" height="1" fill="#a0a0a0"/>
<rect x="1" y="8" width="1" height="1" fill="#a0a0a0"/>
<rect x="1" y="9" width="1" height="1" fill="#a0a0a0"/>
<rect x="10" y="2" width="1" height="1" fill="#ffffff"/>
<rect x="10" y="3" width="1" height="1" fill="#ffffff"/>
<rect x="11" y="4" width="1" height="1" fill="#ffffff"/>
<rect x="11" y="5" width="1" height="1" fill="#ffffff"/>
<rect x="11" y="6" width="1" height="1" fill="#ffffff"/>
<rect x="11" y="7" width="1" height="1" fill="#ffffff"/>
<rect x="10" y="8" width="1" height="1" fill="#ffffff"/>
<rect x="10" y="9" width="1" height="1" fill="#ffffff"/>
<rect x="2" y="10" width="1" height="1" fill="#ffffff"/>
<rect x="3" y="10" width="1" height="1" fill="#ffffff"/>
<rect x="8" y="10" width="1" height="1" fill="#ffffff"/>
<rect x="9" y="10" width="1" height="1" fill="#ffffff"/>
<rect x="4" y="11" width="1" height="1" fill="#ffffff"/>
<rect x="5" y="11" width="1" height="1" fill="#ffffff"/>
<rect x="6" y="11" width="1" height="1" fill="#ffffff"/>
<rect x="7" y="11" width="1" height="1" fill="#ffffff"/>
<rect x="4" y="1" width="1" height="1" fill="#696969"/>
<rect x="5" y="1" width="1" height="1" fill="#696969"/>
<rect x="6" y="1" width="1" height="1" fill="#696969"/>
<rect x="7" y="1" width="1" height="1" fill="#696969"/>
<rect x="2" y="2" width="1" height="1" fill="#696969"/>
<rect x="3" y="2" width="1" height="1" fill="#696969"/>
<rect x="8" y="2" width="1" height="1" fill="#696969"/>
<rect x="9" y="2" width="1" height="1" fill="#696969"/>
<rect x="2" y="3" width="1" height="1" fill="#696969"/>
<rect x="1" y="4" width="1" height="1" fill="#696969"/>
<rect x="1" y="5" width="1" height="1" fill="#696969"/>
<rect x="1" y="6" width="1" height="1" fill="#696969"/>
<rect x="1" y="7" width="1" height="1" fill="#696969"/>
<rect x="2" y="8" width="1" height="1" fill="#696969"/>
<rect x="2" y="9" width="1" height="1" fill="#696969"/>
<rect x="9" y="3" width="1" height="1" fill="#e3e3e3"/>
<rect x="10" y="4" width="1" height="1" fill="#e3e3e3"/>
<rect x="10" y="5" width="1" height="1" fill="#e3e3e3"/>
<rect x="10" y="6" width="1" height="1" fill="#e3e3e3"/>
<rect x="10" y="7" width="1" height="1" fill="#e3e3e3"/>
<rect x="9" y="8" width="1" height="1" fill="#e3e3e3"/>
<rect x="9" y="9" width="1" height="1" fill="#e3e3e3"/>
<rect x="8" y="9" width="1" height="1" fill="#e3e3e3"/>
<rect x="3" y="9" width="1" height="1" fill="#e3e3e3"/>
<rect x="4" y="10" width="1" height="1" fill="#e3e3e3"/>
<rect x="5" y="10" width="1" height="1" fill="#e3e3e3"/>
<rect x="6" y="10" width="1" height="1" fill="#e3e3e3"/>
<rect x="7" y="10" width="1" height="1" fill="#e3e3e3"/>
<rect x="3" y="3" width="6" height="6" fill="#ffffff"/>
<rect x="2" y="4" width="8" height="4" fill="#ffffff"/>
<rect x="4" y="2" width="4" height="8" fill="#ffffff"/>
</g>
<g transform="translate(440,366)">
<rect x="4" y="0" width="1" height="1" fill="#a0a0a0"/>
<rect x="5" y="0" width="1" height="1" fill="#a0a0a0"/>
<rect x="6" y="0" width="1" height="1" fill="#a0a0a0"/>
<rect x="7" y="0" width="1" height="1" fill="#a0a0a0"/>
<rect x="2" y="1" width="1" height="1" fill="#a0a0a0"/>
<rect x="3" y="1" width="1" height="1" fill="#a0a0a0"/>
<rect x="8" y="1" width="1" height="1" fill="#a0a0a0"/>
<rect x="9" y="1" width="1" height="1" fill="#a0a0a0"/>
<rect x="1" y="2" width="1" height="1" fill="#a0a0a0"/>
<rect x="1" y="3" width="1" height="1" fill="#a0a0a0"/>
<rect x="0" y="4" width="1" height="1" fill="#a0a0a0"/>
<rect x="0" y="5" width="1" height="1" fill="#a0a0a0"/>
<rect x="0" y="6" width="1" height="1" fill="#a0a0a0"/>
<rect x="0" y="7" width="1" height="1" fill="#a0a0a0"/>
<rect x="1" y="8" width="1" height="1" fill="#a0a0a0"/>
<rect x="1" y="9" width="1" height="1" fill="#a0a0a0"/>
<rect x="10" y="2" width="1" height="1" fill="#ffffff"/>
<rect x="10" y="3" width="1" height="1" fill="#ffffff"/>
<rect x="11" y="4" width="1" height="1" fill="#ffffff"/>
<rect x="11" y="5" width="1" height="1" fill="#ffffff"/>
<rect x="11" y="6" width="1" height="1" fill="#ffffff"/>
<rect x="11" y="7" width="1" height="1" fill="#ffffff"/>
<rect x="10" y="8" width="1" height="1" fill="#ffffff"/>
<rect x="10" y="9" width="1" height="1" fill="#ffffff"/>
<rect x="2" y="10" width="1" height="1" fill="#ffffff"/>
<rect x="3" y="10" width="1" height="1" fill="#ffffff"/>
<rect x="8" y="10" width="1" height="1" fill="#ffffff"/>
<rect x="9" y="10" width="1" height="1" fill="#ffffff"/>
<rect x="4" y="11" width="1" height="1" fill="#ffffff"/>
<rect x="5" y="11" width="1" height="1" fill="#ffffff"/>
<rect x="6" y="11" width="1" height="1" fill="#ffffff"/>
<rect x="7" y="11" width="1" height="1" fill="#ffffff"/>
<rect x="4" y="1" width="1" height="1" fill="#696969"/>
<rect x="5" y="1" width="1" height="1" fill="#696969"/>
<rect x="6" y="1" width="1" height="1" fill="#696969"/>
<rect x="7" y="1" width="1" height="1" fill="#696969"/>
<rect x="2" y="2" width="1" height="1" fill="#696969"/>
<rect x="3" y="2" width="1" height="1" fill="#696969"/>
<rect x="8" y="2" width="1" height="1" fill="#696969"/>
<rect x="9" y="2" width="1" height="1" fill="#696969"/>
<rect x="2" y="3" width="1" height="1" fill="#696969"/>
<rect x="1" y="4" width="1" height="1" fill="#696969"/>
<rect x="1" y="5" width="1" height="1" fill="#696969"/>
<rect x="1" y="6" width="1" height="1" fill="#696969"/>
<rect x="1" y="7" width="1" height="1" fill="#696969"/>
<rect x="2" y="8" width="1" height="1" fill="#696969"/>
<rect x="2" y="9" width="1" height="1" fill="#696969"/>
<rect x="9" y="3" width="1" height="1" fill="#e3e3e3"/>
<rect x="10" y="4" width="1" height="1" fill="#e3e3e3"/>
<rect x="10" y="5" width="1" height="1" fill="#e3e3e3"/>
<rect x="10" y="6" width="1" height="1" fill="#e3e3e3"/>
<rect x="10" y="7" width="1" height="1" fill="#e3e3e3"/>
<rect x="9" y="8" width="1" height="1" fill="#e3e3e3"/>
<rect x="9" y="9" width="1" height="1" fill="#e3e3e3"/>
<rect x="8" y="9" width="1" height="1" fill="#e3e3e3"/>
<rect x="3" y="9" width="1" height="1" fill="#e3e3e3"/>
<rect x="4" y="10" width="1" height="1" fill="#e3e3e3"/>
<rect x="5" y="10" width="1" height="1" fill="#e3e3e3"/>
<rect x="6" y="10" width="1" height="1" fill="#e3e3e3"/>
<rect x="7" y="10" width="1" height="1" fill="#e3e3e3"/>
<rect x="3" y="3" width="6" height="6" fill="#ffffff"/>
<rect x="2" y="4" width="8" height="4" fill="#ffffff"/>
<rect x="4" y="2" width="4" height="8" fill="#ffffff"/>
<rect x="5" y="4" width="2" height="4" fill="#000"/><rect x="4" y="5" width="4" height="2" fill="#000"/>
</g>
<rect x="494" y="366" width="12" height="1" fill="#a0a0a0"/>
<rect x="494" y="366" width="1" height="12" fill="#a0a0a0"/>
<rect x="495" y="367" width="10" height="1" fill="#696969"/>
<rect x="495" y="367" width="1" height="10" fill="#696969"/>
<rect x="494" y="378" width="13" height="1" fill="#ffffff"/>
<rect x="506" y="366" width="1" height="13" fill="#ffffff"/>
<rect x="495" y="377" width="11" height="1" fill="#e3e3e3"/>
<rect x="505" y="367" width="1" height="11" fill="#e3e3e3"/>
<rect x="496" y="368" width="9" height="9" fill="#ffffff"/>
<rect x="503" y="369" width="1" height="1" fill="#000"/>
<rect x="502" y="370" width="1" height="1" fill="#000"/>
<rect x="503" y="370" width="1" height="1" fill="#000"/>
<rect x="497" y="371" width="1" height="1" fill="#000"/>
<rect x="501" y="371" width="1" height="1" fill="#000"/>
<rect x="502" y="371" width="1" height="1" fill="#000"/>
<rect x="503" y="371" width="1" height="1" fill="#000"/>
<rect x="497" y="372" width="1" height="1" fill="#000"/>
<rect x="498" y="372" width="1" height="1" fill="#000"/>
<rect x="500" y="372" width="1" height="1" fill="#000"/>
<rect x="501" y="372" width="1" height="1" fill="#000"/>
<rect x="502" y="372" width="1" height="1" fill="#000"/>
<rect x="497" y="373" width="1" height="1" fill="#000"/>
<rect x="498" y="373" width="1" height="1" fill="#000"/>
<rect x="499" y="373" width="1" height="1" fill="#000"/>
<rect x="500" y="373" width="1" height="1" fill="#000"/>
<rect x="501" y="373" width="1" height="1" fill="#000"/>
<rect x="498" y="374" width="1" height="1" fill="#000"/>
<rect x="499" y="374" width="1" height="1" fill="#000"/>
<rect x="500" y="374" width="1" height="1" fill="#000"/>
<rect x="499" y="375" width="1" height="1" fill="#000"/>
<rect x="14" y="393" width="12" height="1" fill="#a0a0a0"/>
<rect x="14" y="393" width="1" height="12" fill="#a0a0a0"/>
<rect x="15" y="394" width="10" height="1" fill="#696969"/>
<rect x="15" y="394" width="1" height="10" fill="#696969"/>
<rect x="14" y="405" width="13" height="1" fill="#ffffff"/>
<rect x="26" y="393" width="1" height="13" fill="#ffffff"/>
<rect x="15" y="404" width="11" height="1" fill="#e3e3e3"/>
<rect x="25" y="394" width="1" height="11" fill="#e3e3e3"/>
<rect x="16" y="395" width="9" height="9" fill="#ffffff"/>
<rect x="23" y="396" width="1" height="1" fill="#000"/>
<rect x="22" y="397" width="1" height="1" fill="#000"/>
<rect x="23" y="397" width="1" height="1" fill="#000"/>
<rect x="17" y="398" width="1" height="1" fill="#000"/>
<rect x="21" y="398" width="1" height="1" fill="#000"/>
<rect x="22" y="398" width="1" height="1" fill="#000"/>
<rect x="23" y="398" width="1" height="1" fill="#000"/>
<rect x="17" y="399" width="1" height="1" fill="#000"/>
<rect x="18" y="399" width="1" height="1" fill="#000"/>
<rect x="20" y="399" width="1" height="1" fill="#000"/>
<rect x="21" y="399" width="1" height="1" fill="#000"/>
<rect x="22" y="399" width="1" height="1" fill="#000"/>
<rect x="17" y="400" width="1" height="1" fill="#000"/>
<rect x="18" y="400" width="1" height="1" fill="#000"/>
<rect x="19" y="400" width="1" height="1" fill="#000"/>
<rect x="20" y="400" width="1" height="1" fill="#000"/>
<rect x="21" y="400" width="1" height="1" fill="#000"/>
<rect x="18" y="401" width="1" height="1" fill="#000"/>
<rect x="19" y="401" width="1" height="1" fill="#000"/>
<rect x="20" y="401" width="1" height="1" fill="#000"/>
<rect x="19" y="402" width="1" height="1" fill="#000"/>
<rect x="353" y="393" width="12" height="1" fill="#a0a0a0"/>
<rect x="353" y="393" width="1" height="12" fill="#a0a0a0"/>
<rect x="354" y="394" width="10" height="1" fill="#696969"/>
<rect x="354" y="394" width="1" height="10" fill="#696969"/>
<rect x="353" y="405" width="13" height="1" fill="#ffffff"/>
<rect x="365" y="393" width="1" height="13" fill="#ffffff"/>
<rect x="354" y="404" width="11" height="1" fill="#e3e3e3"/>
<rect x="364" y="394" width="1" height="11" fill="#e3e3e3"/>
<rect x="355" y="395" width="9" height="9" fill="#ffffff"/>
<rect x="416" y="405" width="9" height="1" fill="#a0a0a0"/>
<rect x="481" y="405" width="88" height="1" fill="#a0a0a0"/>
<rect x="417" y="406" width="8" height="1" fill="#ffffff"/>
<rect x="481" y="406" width="87" height="1" fill="#ffffff"/>
<rect x="416" y="405" width="1" height="78" fill="#a0a0a0"/>
<rect x="417" y="406" width="1" height="76" fill="#ffffff"/>
<rect x="568" y="405" width="1" height="78" fill="#a0a0a0"/>
<rect x="569" y="405" width="1" height="79" fill="#ffffff"/>
<rect x="416" y="482" width="153" height="1" fill="#a0a0a0"/>
<rect x="416" y="483" width="154" height="1" fill="#ffffff"/>
<rect x="422" y="421" width="12" height="1" fill="#a0a0a0"/>
<rect x="422" y="421" width="1" height="12" fill="#a0a0a0"/>
<rect x="423" y="422" width="10" height="1" fill="#696969"/>
<rect x="423" y="422" width="1" height="10" fill="#696969"/>
<rect x="422" y="433" width="13" height="1" fill="#ffffff"/>
<rect x="434" y="421" width="1" height="13" fill="#ffffff"/>
<rect x="423" y="432" width="11" height="1" fill="#e3e3e3"/>
<rect x="433" y="422" width="1" height="11" fill="#e3e3e3"/>
<rect x="424" y="423" width="9" height="9" fill="#ffffff"/>
<rect x="431" y="424" width="1" height="1" fill="#000"/>
<rect x="430" y="425" width="1" height="1" fill="#000"/>
<rect x="431" y="425" width="1" height="1" fill="#000"/>
<rect x="425" y="426" width="1" height="1" fill="#000"/>
<rect x="429" y="426" width="1" height="1" fill="#000"/>
<rect x="430" y="426" width="1" height="1" fill="#000"/>
<rect x="431" y="426" width="1" height="1" fill="#000"/>
<rect x="425" y="427" width="1" height="1" fill="#000"/>
<rect x="426" y="427" width="1" height="1" fill="#000"/>
<rect x="428" y="427" width="1" height="1" fill="#000"/>
<rect x="429" y="427" width="1" height="1" fill="#000"/>
<rect x="430" y="427" width="1" height="1" fill="#000"/>
<rect x="425" y="428" width="1" height="1" fill="#000"/>
<rect x="426" y="428" width="1" height="1" fill="#000"/>
<rect x="427" y="428" width="1" height="1" fill="#000"/>
<rect x="428" y="428" width="1" height="1" fill="#000"/>
<rect x="429" y="428" width="1" height="1" fill="#000"/>
<rect x="426" y="429" width="1" height="1" fill="#000"/>
<rect x="427" y="429" width="1" height="1" fill="#000"/>
<rect x="428" y="429" width="1" height="1" fill="#000"/>
<rect x="427" y="430" width="1" height="1" fill="#000"/>
<rect x="493" y="421" width="12" height="1" fill="#a0a0a0"/>
<rect x="493" y="421" width="1" height="12" fill="#a0a0a0"/>
<rect x="494" y="422" width="10" height="1" fill="#696969"/>
<rect x="494" y="422" width="1" height="10" fill="#696969"/>
<rect x="493" y="433" width="13" height="1" fill="#ffffff"/>
<rect x="505" y="421" width="1" height="13" fill="#ffffff"/>
<rect x="494" y="432" width="11" height="1" fill="#e3e3e3"/>
<rect x="504" y="422" width="1" height="11" fill="#e3e3e3"/>
<rect x="495" y="423" width="9" height="9" fill="#ffffff"/>
<rect x="422" y="444" width="12" height="1" fill="#a0a0a0"/>
<rect x="422" y="444" width="1" height="12" fill="#a0a0a0"/>
<rect x="423" y="445" width="10" height="1" fill="#696969"/>
<rect x="423" y="445" width="1" height="10" fill="#696969"/>
<rect x="422" y="456" width="13" height="1" fill="#ffffff"/>
<rect x="434" y="444" width="1" height="13" fill="#ffffff"/>
<rect x="423" y="455" width="11" height="1" fill="#e3e3e3"/>
<rect x="433" y="445" width="1" height="11" fill="#e3e3e3"/>
<rect x="424" y="446" width="9" height="9" fill="#ffffff"/>
<rect x="431" y="447" width="1" height="1" fill="#000"/>
<rect x="430" y="448" width="1" height="1" fill="#000"/>
<rect x="431" y="448" width="1" height="1" fill="#000"/>
<rect x="425" y="449" width="1" height="1" fill="#000"/>
<rect x="429" y="449" width="1" height="1" fill="#000"/>
<rect x="430" y="449" width="1" height="1" fill="#000"/>
<rect x="431" y="449" width="1" height="1" fill="#000"/>
<rect x="425" y="450" width="1" height="1" fill="#000"/>
<rect x="426" y="450" width="1" height="1" fill="#000"/>
<rect x="428" y="450" width="1" height="1" fill="#000"/>
<rect x="429" y="450" width="1" height="1" fill="#000"/>
<rect x="430" y="450" width="1" height="1" fill="#000"/>
<rect x="425" y="451" width="1" height="1" fill="#000"/>
<rect x="426" y="451" width="1" height="1" fill="#000"/>
<rect x="427" y="451" width="1" height="1" fill="#000"/>
<rect x="428" y="451" width="1" height="1" fill="#000"/>
<rect x="429" y="451" width="1" height="1" fill="#000"/>
<rect x="426" y="452" width="1" height="1" fill="#000"/>
<rect x="427" y="452" width="1" height="1" fill="#000"/>
<rect x="428" y="452" width="1" height="1" fill="#000"/>
<rect x="427" y="453" width="1" height="1" fill="#000"/>
<rect x="422" y="467" width="12" height="1" fill="#a0a0a0"/>
<rect x="422" y="467" width="1" height="12" fill="#a0a0a0"/>
<rect x="423" y="468" width="10" height="1" fill="#696969"/>
<rect x="423" y="468" width="1" height="10" fill="#696969"/>
<rect x="422" y="479" width="13" height="1" fill="#ffffff"/>
<rect x="434" y="467" width="1" height="13" fill="#ffffff"/>
<rect x="423" y="478" width="11" height="1" fill="#e3e3e3"/>
<rect x="433" y="468" width="1" height="11" fill="#e3e3e3"/>
<rect x="424" y="469" width="9" height="9" fill="#ffffff"/>
<rect x="431" y="470" width="1" height="1" fill="#000"/>
<rect x="430" y="471" width="1" height="1" fill="#000"/>
<rect x="431" y="471" width="1" height="1" fill="#000"/>
<rect x="425" y="472" width="1" height="1" fill="#000"/>
<rect x="429" y="472" width="1" height="1" fill="#000"/>
<rect x="430" y="472" width="1" height="1" fill="#000"/>
<rect x="431" y="472" width="1" height="1" fill="#000"/>
<rect x="425" y="473" width="1" height="1" fill="#000"/>
<rect x="426" y="473" width="1" height="1" fill="#000"/>
<rect x="428" y="473" width="1" height="1" fill="#000"/>
<rect x="429" y="473" width="1" height="1" fill="#000"/>
<rect x="430" y="473" width="1" height="1" fill="#000"/>
<rect x="425" y="474" width="1" height="1" fill="#000"/>
<rect x="426" y="474" width="1" height="1" fill="#000"/>
<rect x="427" y="474" width="1" height="1" fill="#000"/>
<rect x="428" y="474" width="1" height="1" fill="#000"/>
<rect x="429" y="474" width="1" height="1" fill="#000"/>
<rect x="426" y="475" width="1" height="1" fill="#000"/>
<rect x="427" y="475" width="1" height="1" fill="#000"/>
<rect x="428" y="475" width="1" height="1" fill="#000"/>
<rect x="427" y="476" width="1" height="1" fill="#000"/>
<rect x="417" y="492" width="9" height="1" fill="#a0a0a0"/>
<rect x="533" y="492" width="36" height="1" fill="#a0a0a0"/>
<rect x="418" y="493" width="8" height="1" fill="#ffffff"/>
<rect x="533" y="493" width="35" height="1" fill="#ffffff"/>
<rect x="417" y="492" width="1" height="44" fill="#a0a0a0"/>
<rect x="418" y="493" width="1" height="42" fill="#ffffff"/>
<rect x="568" y="492" width="1" height="44" fill="#a0a0a0"/>
<rect x="569" y="492" width="1" height="45" fill="#ffffff"/>
<rect x="417" y="535" width="152" height="1" fill="#a0a0a0"/>
<rect x="417" y="536" width="153" height="1" fill="#ffffff"/>
<rect x="423" y="506" width="140" height="1" fill="#a0a0a0"/>
<rect x="423" y="506" width="1" height="20" fill="#a0a0a0"/>
<rect x="424" y="507" width="138" height="1" fill="#696969"/>
<rect x="424" y="507" width="1" height="18" fill="#696969"/>
<rect x="423" y="526" width="141" height="1" fill="#ffffff"/>
<rect x="563" y="506" width="1" height="21" fill="#ffffff"/>
<rect x="424" y="525" width="139" height="1" fill="#e3e3e3"/>
<rect x="562" y="507" width="1" height="19" fill="#e3e3e3"/>
<rect x="425" y="508" width="137" height="17" fill="#ffffff"/>
<rect x="545" y="508" width="16" height="1" fill="#ffffff"/>
<rect x="545" y="508" width="1" height="16" fill="#ffffff"/>
<rect x="546" y="509" width="14" height="1" fill="#f0f0f0"/>
<rect x="546" y="509" width="1" height="14" fill="#f0f0f0"/>
<rect x="545" y="524" width="17" height="1" fill="#696969"/>
<rect x="561" y="508" width="1" height="17" fill="#696969"/>
<rect x="546" y="523" width="15" height="1" fill="#a0a0a0"/>
<rect x="560" y="509" width="1" height="15" fill="#a0a0a0"/>
<rect x="547" y="510" width="13" height="13" fill="#f0f0f0"/>
<rect x="545" y="508" width="16" height="1" fill="#e3e3e3"/>
<rect x="545" y="508" width="1" height="16" fill="#e3e3e3"/>
<rect x="546" y="509" width="14" height="1" fill="#ffffff"/>
<rect x="546" y="509" width="1" height="14" fill="#ffffff"/>
<path d="M549.6 515 H557.4 L553.5 519 Z" fill="#000" shape-rendering="geometricPrecision"/>
<rect x="589" y="79" width="9" height="1" fill="#a0a0a0"/>
<rect x="634" y="79" width="147" height="1" fill="#a0a0a0"/>
<rect x="590" y="80" width="8" height="1" fill="#ffffff"/>
<rect x="634" y="80" width="146" height="1" fill="#ffffff"/>
<rect x="589" y="79" width="1" height="469" fill="#a0a0a0"/>
<rect x="590" y="80" width="1" height="467" fill="#ffffff"/>
<rect x="780" y="79" width="1" height="469" fill="#a0a0a0"/>
<rect x="781" y="79" width="1" height="470" fill="#ffffff"/>
<rect x="589" y="547" width="192" height="1" fill="#a0a0a0"/>
<rect x="589" y="548" width="193" height="1" fill="#ffffff"/>
<g fill="none" stroke="#000" stroke-width="1">
<rect x="595.5" y="88.5" width="129" height="415"/>
</g>
<rect x="602" y="137" width="47" height="1" fill="#000"/>
<rect x="602" y="477" width="47" height="1" fill="#000"/>
<rect x="602" y="137" width="1" height="341" fill="#000"/>
<rect x="648" y="137" width="1" height="341" fill="#000"/>
<rect x="603" y="138" width="45" height="339" fill="#f0f0f0"/>
<rect x="603" y="138" width="45" height="1" fill="#ffffff"/>
<rect x="608" y="139" width="41" height="2" fill="#ffffff"/>
<rect x="603" y="474" width="45" height="3" fill="#ffffff"/>
<rect x="603" y="138" width="1" height="339" fill="#ffffff"/>
<rect x="608" y="139" width="40" height="1" fill="#ececec"/>
<rect x="607" y="141" width="42" height="1" fill="#000"/>
<rect x="607" y="151" width="42" height="1" fill="#000"/>
<rect x="608" y="142" width="40" height="9" fill="#ffffff"/>
<rect x="608" y="152" width="40" height="3" fill="#ffffff"/>
<rect x="608" y="153" width="40" height="1" fill="#ececec"/>
<rect x="607" y="155" width="42" height="1" fill="#000"/>
<rect x="607" y="165" width="42" height="1" fill="#000"/>
<rect x="608" y="156" width="40" height="9" fill="#ffffff"/>
<rect x="608" y="166" width="40" height="3" fill="#ffffff"/>
<rect x="608" y="167" width="40" height="1" fill="#ececec"/>
<rect x="607" y="169" width="42" height="1" fill="#000"/>
<rect x="607" y="179" width="42" height="1" fill="#000"/>
<rect x="608" y="170" width="40" height="9" fill="#ffffff"/>
<rect x="608" y="180" width="40" height="3" fill="#ffffff"/>
<rect x="608" y="181" width="40" height="1" fill="#ececec"/>
<rect x="607" y="183" width="42" height="1" fill="#000"/>
<rect x="607" y="193" width="42" height="1" fill="#000"/>
<rect x="608" y="184" width="40" height="9" fill="#ffffff"/>
<rect x="608" y="194" width="40" height="3" fill="#ffffff"/>
<rect x="608" y="195" width="40" height="1" fill="#ececec"/>
<rect x="607" y="197" width="42" height="1" fill="#000"/>
<rect x="607" y="207" width="42" height="1" fill="#000"/>
<rect x="608" y="198" width="40" height="9" fill="#0000ff"/>
<rect x="608" y="208" width="40" height="3" fill="#ffffff"/>
<rect x="608" y="209" width="40" height="1" fill="#ececec"/>
<rect x="607" y="211" width="42" height="1" fill="#000"/>
<rect x="607" y="221" width="42" height="1" fill="#000"/>
<rect x="608" y="212" width="40" height="9" fill="#0000ff"/>
<rect x="608" y="222" width="40" height="3" fill="#ffffff"/>
<rect x="608" y="223" width="40" height="1" fill="#ececec"/>
<rect x="607" y="225" width="42" height="1" fill="#000"/>
<rect x="607" y="235" width="42" height="1" fill="#000"/>
<rect x="608" y="226" width="40" height="9" fill="#0000ff"/>
<rect x="608" y="236" width="40" height="3" fill="#ffffff"/>
<rect x="608" y="237" width="40" height="1" fill="#ececec"/>
<rect x="607" y="239" width="42" height="1" fill="#000"/>
<rect x="607" y="249" width="42" height="1" fill="#000"/>
<rect x="608" y="240" width="40" height="9" fill="#0000ff"/>
<rect x="608" y="250" width="40" height="3" fill="#ffffff"/>
<rect x="608" y="251" width="40" height="1" fill="#ececec"/>
<rect x="607" y="253" width="42" height="1" fill="#000"/>
<rect x="607" y="263" width="42" height="1" fill="#000"/>
<rect x="608" y="254" width="40" height="9" fill="#0000ff"/>
<rect x="608" y="264" width="40" height="3" fill="#ffffff"/>
<rect x="608" y="265" width="40" height="1" fill="#ececec"/>
<rect x="607" y="267" width="42" height="1" fill="#000"/>
<rect x="607" y="277" width="42" height="1" fill="#000"/>
<rect x="608" y="268" width="40" height="9" fill="#0000ff"/>
<rect x="608" y="278" width="40" height="3" fill="#ffffff"/>
<rect x="608" y="279" width="40" height="1" fill="#ececec"/>
<rect x="607" y="281" width="42" height="1" fill="#000"/>
<rect x="607" y="291" width="42" height="1" fill="#000"/>
<rect x="608" y="282" width="40" height="9" fill="#0000ff"/>
<rect x="608" y="292" width="40" height="3" fill="#ffffff"/>
<rect x="608" y="293" width="40" height="1" fill="#ececec"/>
<rect x="607" y="295" width="42" height="1" fill="#000"/>
<rect x="607" y="305" width="42" height="1" fill="#000"/>
<rect x="608" y="296" width="40" height="9" fill="#0000ff"/>
<rect x="608" y="306" width="40" height="3" fill="#ffffff"/>
<rect x="608" y="307" width="40" height="1" fill="#ececec"/>
<rect x="607" y="309" width="42" height="1" fill="#000"/>
<rect x="607" y="319" width="42" height="1" fill="#000"/>
<rect x="608" y="310" width="40" height="9" fill="#0000ff"/>
<rect x="608" y="320" width="40" height="3" fill="#ffffff"/>
<rect x="608" y="321" width="40" height="1" fill="#ececec"/>
<rect x="607" y="323" width="42" height="1" fill="#000"/>
<rect x="607" y="333" width="42" height="1" fill="#000"/>
<rect x="608" y="324" width="40" height="9" fill="#0000ff"/>
<rect x="608" y="334" width="40" height="3" fill="#ffffff"/>
<rect x="608" y="335" width="40" height="1" fill="#ececec"/>
<rect x="607" y="337" width="42" height="1" fill="#000"/>
<rect x="607" y="347" width="42" height="1" fill="#000"/>
<rect x="608" y="338" width="40" height="9" fill="#0000ff"/>
<rect x="608" y="348" width="40" height="3" fill="#ffffff"/>
<rect x="608" y="349" width="40" height="1" fill="#ececec"/>
<rect x="607" y="351" width="42" height="1" fill="#000"/>
<rect x="607" y="361" width="42" height="1" fill="#000"/>
<rect x="608" y="352" width="40" height="9" fill="#0000ff"/>
<rect x="608" y="362" width="40" height="3" fill="#ffffff"/>
<rect x="608" y="363" width="40" height="1" fill="#ececec"/>
<rect x="607" y="365" width="42" height="1" fill="#000"/>
<rect x="607" y="375" width="42" height="1" fill="#000"/>
<rect x="608" y="366" width="40" height="9" fill="#0000ff"/>
<rect x="608" y="376" width="40" height="3" fill="#ffffff"/>
<rect x="608" y="377" width="40" height="1" fill="#ececec"/>
<rect x="607" y="379" width="42" height="1" fill="#000"/>
<rect x="607" y="389" width="42" height="1" fill="#000"/>
<rect x="608" y="380" width="40" height="9" fill="#0000ff"/>
<rect x="608" y="390" width="40" height="3" fill="#ffffff"/>
<rect x="608" y="391" width="40" height="1" fill="#ececec"/>
<rect x="607" y="393" width="42" height="1" fill="#000"/>
<rect x="607" y="403" width="42" height="1" fill="#000"/>
<rect x="608" y="394" width="40" height="9" fill="#0000ff"/>
<rect x="608" y="404" width="40" height="3" fill="#ffffff"/>
<rect x="608" y="405" width="40" height="1" fill="#ececec"/>
<rect x="607" y="407" width="42" height="1" fill="#000"/>
<rect x="607" y="417" width="42" height="1" fill="#000"/>
<rect x="608" y="408" width="40" height="9" fill="#0000ff"/>
<rect x="608" y="418" width="40" height="3" fill="#ffffff"/>
<rect x="608" y="419" width="40" height="1" fill="#ececec"/>
<rect x="607" y="421" width="42" height="1" fill="#000"/>
<rect x="607" y="431" width="42" height="1" fill="#000"/>
<rect x="608" y="422" width="40" height="9" fill="#0000ff"/>
<rect x="608" y="432" width="40" height="3" fill="#ffffff"/>
<rect x="608" y="433" width="40" height="1" fill="#ececec"/>
<rect x="607" y="435" width="42" height="1" fill="#000"/>
<rect x="607" y="445" width="42" height="1" fill="#000"/>
<rect x="608" y="436" width="40" height="9" fill="#0000ff"/>
<rect x="608" y="446" width="40" height="3" fill="#ffffff"/>
<rect x="608" y="447" width="40" height="1" fill="#ececec"/>
<rect x="607" y="449" width="42" height="1" fill="#000"/>
<rect x="607" y="459" width="42" height="1" fill="#000"/>
<rect x="608" y="450" width="40" height="9" fill="#0000ff"/>
<rect x="608" y="460" width="40" height="3" fill="#ffffff"/>
<rect x="608" y="461" width="40" height="1" fill="#ececec"/>
<rect x="607" y="463" width="42" height="1" fill="#000"/>
<rect x="607" y="473" width="42" height="1" fill="#000"/>
<rect x="608" y="464" width="40" height="9" fill="#0000ff"/>
<rect x="608" y="475" width="40" height="1" fill="#ececec"/>
<rect x="607" y="141" width="1" height="333" fill="#000"/>
<rect x="648" y="141" width="1" height="333" fill="#000"/>
<rect x="671" y="137" width="47" height="1" fill="#000"/>
<rect x="671" y="477" width="47" height="1" fill="#000"/>
<rect x="671" y="137" width="1" height="341" fill="#000"/>
<rect x="717" y="137" width="1" height="341" fill="#000"/>
<rect x="672" y="138" width="45" height="339" fill="#f0f0f0"/>
<rect x="672" y="138" width="45" height="1" fill="#ffffff"/>
<rect x="671" y="139" width="42" height="2" fill="#ffffff"/>
<rect x="672" y="474" width="45" height="3" fill="#ffffff"/>
<rect x="716" y="138" width="1" height="339" fill="#ffffff"/>
<rect x="672" y="139" width="40" height="1" fill="#ececec"/>
<rect x="671" y="141" width="42" height="1" fill="#000"/>
<rect x="671" y="151" width="42" height="1" fill="#000"/>
<rect x="672" y="142" width="40" height="9" fill="#ffffff"/>
<rect x="672" y="152" width="40" height="3" fill="#ffffff"/>
<rect x="672" y="153" width="40" height="1" fill="#ececec"/>
<rect x="671" y="155" width="42" height="1" fill="#000"/>
<rect x="671" y="165" width="42" height="1" fill="#000"/>
<rect x="672" y="156" width="40" height="9" fill="#ffffff"/>
<rect x="672" y="166" width="40" height="3" fill="#ffffff"/>
<rect x="672" y="167" width="40" height="1" fill="#ececec"/>
<rect x="671" y="169" width="42" height="1" fill="#000"/>
<rect x="671" y="179" width="42" height="1" fill="#000"/>
<rect x="672" y="170" width="40" height="9" fill="#ffffff"/>
<rect x="672" y="180" width="40" height="3" fill="#ffffff"/>
<rect x="672" y="181" width="40" height="1" fill="#ececec"/>
<rect x="671" y="183" width="42" height="1" fill="#000"/>
<rect x="671" y="193" width="42" height="1" fill="#000"/>
<rect x="672" y="184" width="40" height="9" fill="#ffffff"/>
<rect x="672" y="194" width="40" height="3" fill="#ffffff"/>
<rect x="672" y="195" width="40" height="1" fill="#ececec"/>
<rect x="671" y="197" width="42" height="1" fill="#000"/>
<rect x="671" y="207" width="42" height="1" fill="#000"/>
<rect x="672" y="198" width="40" height="9" fill="#0000ff"/>
<rect x="672" y="208" width="40" height="3" fill="#ffffff"/>
<rect x="672" y="209" width="40" height="1" fill="#ececec"/>
<rect x="671" y="211" width="42" height="1" fill="#000"/>
<rect x="671" y="221" width="42" height="1" fill="#000"/>
<rect x="672" y="212" width="40" height="9" fill="#0000ff"/>
<rect x="672" y="222" width="40" height="3" fill="#ffffff"/>
<rect x="672" y="223" width="40" height="1" fill="#ececec"/>
<rect x="671" y="225" width="42" height="1" fill="#000"/>
<rect x="671" y="235" width="42" height="1" fill="#000"/>
<rect x="672" y="226" width="40" height="9" fill="#0000ff"/>
<rect x="672" y="236" width="40" height="3" fill="#ffffff"/>
<rect x="672" y="237" width="40" height="1" fill="#ececec"/>
<rect x="671" y="239" width="42" height="1" fill="#000"/>
<rect x="671" y="249" width="42" height="1" fill="#000"/>
<rect x="672" y="240" width="40" height="9" fill="#0000ff"/>
<rect x="672" y="250" width="40" height="3" fill="#ffffff"/>
<rect x="672" y="251" width="40" height="1" fill="#ececec"/>
<rect x="671" y="253" width="42" height="1" fill="#000"/>
<rect x="671" y="263" width="42" height="1" fill="#000"/>
<rect x="672" y="254" width="40" height="9" fill="#0000ff"/>
<rect x="672" y="264" width="40" height="3" fill="#ffffff"/>
<rect x="672" y="265" width="40" height="1" fill="#ececec"/>
<rect x="671" y="267" width="42" height="1" fill="#000"/>
<rect x="671" y="277" width="42" height="1" fill="#000"/>
<rect x="672" y="268" width="40" height="9" fill="#0000ff"/>
<rect x="672" y="278" width="40" height="3" fill="#ffffff"/>
<rect x="672" y="279" width="40" height="1" fill="#ececec"/>
<rect x="671" y="281" width="42" height="1" fill="#000"/>
<rect x="671" y="291" width="42" height="1" fill="#000"/>
<rect x="672" y="282" width="40" height="9" fill="#0000ff"/>
<rect x="672" y="292" width="40" height="3" fill="#ffffff"/>
<rect x="672" y="293" width="40" height="1" fill="#ececec"/>
<rect x="671" y="295" width="42" height="1" fill="#000"/>
<rect x="671" y="305" width="42" height="1" fill="#000"/>
<rect x="672" y="296" width="40" height="9" fill="#0000ff"/>
<rect x="672" y="306" width="40" height="3" fill="#ffffff"/>
<rect x="672" y="307" width="40" height="1" fill="#ececec"/>
<rect x="671" y="309" width="42" height="1" fill="#000"/>
<rect x="671" y="319" width="42" height="1" fill="#000"/>
<rect x="672" y="310" width="40" height="9" fill="#0000ff"/>
<rect x="672" y="320" width="40" height="3" fill="#ffffff"/>
<rect x="672" y="321" width="40" height="1" fill="#ececec"/>
<rect x="671" y="323" width="42" height="1" fill="#000"/>
<rect x="671" y="333" width="42" height="1" fill="#000"/>
<rect x="672" y="324" width="40" height="9" fill="#0000ff"/>
<rect x="672" y="334" width="40" height="3" fill="#ffffff"/>
<rect x="672" y="335" width="40" height="1" fill="#ececec"/>
<rect x="671" y="337" width="42" height="1" fill="#000"/>
<rect x="671" y="347" width="42" height="1" fill="#000"/>
<rect x="672" y="338" width="40" height="9" fill="#0000ff"/>
<rect x="672" y="348" width="40" height="3" fill="#ffffff"/>
<rect x="672" y="349" width="40" height="1" fill="#ececec"/>
<rect x="671" y="351" width="42" height="1" fill="#000"/>
<rect x="671" y="361" width="42" height="1" fill="#000"/>
<rect x="672" y="352" width="40" height="9" fill="#0000ff"/>
<rect x="672" y="362" width="40" height="3" fill="#ffffff"/>
<rect x="672" y="363" width="40" height="1" fill="#ececec"/>
<rect x="671" y="365" width="42" height="1" fill="#000"/>
<rect x="671" y="375" width="42" height="1" fill="#000"/>
<rect x="672" y="366" width="40" height="9" fill="#0000ff"/>
<rect x="672" y="376" width="40" height="3" fill="#ffffff"/>
<rect x="672" y="377" width="40" height="1" fill="#ececec"/>
<rect x="671" y="379" width="42" height="1" fill="#000"/>
<rect x="671" y="389" width="42" height="1" fill="#000"/>
<rect x="672" y="380" width="40" height="9" fill="#0000ff"/>
<rect x="672" y="390" width="40" height="3" fill="#ffffff"/>
<rect x="672" y="391" width="40" height="1" fill="#ececec"/>
<rect x="671" y="393" width="42" height="1" fill="#000"/>
<rect x="671" y="403" width="42" height="1" fill="#000"/>
<rect x="672" y="394" width="40" height="9" fill="#0000ff"/>
<rect x="672" y="404" width="40" height="3" fill="#ffffff"/>
<rect x="672" y="405" width="40" height="1" fill="#ececec"/>
<rect x="671" y="407" width="42" height="1" fill="#000"/>
<rect x="671" y="417" width="42" height="1" fill="#000"/>
<rect x="672" y="408" width="40" height="9" fill="#0000ff"/>
<rect x="672" y="418" width="40" height="3" fill="#ffffff"/>
<rect x="672" y="419" width="40" height="1" fill="#ececec"/>
<rect x="671" y="421" width="42" height="1" fill="#000"/>
<rect x="671" y="431" width="42" height="1" fill="#000"/>
<rect x="672" y="422" width="40" height="9" fill="#0000ff"/>
<rect x="672" y="432" width="40" height="3" fill="#ffffff"/>
<rect x="672" y="433" width="40" height="1" fill="#ececec"/>
<rect x="671" y="435" width="42" height="1" fill="#000"/>
<rect x="671" y="445" width="42" height="1" fill="#000"/>
<rect x="672" y="436" width="40" height="9" fill="#0000ff"/>
<rect x="672" y="446" width="40" height="3" fill="#ffffff"/>
<rect x="672" y="447" width="40" height="1" fill="#ececec"/>
<rect x="671" y="449" width="42" height="1" fill="#000"/>
<rect x="671" y="459" width="42" height="1" fill="#000"/>
<rect x="672" y="450" width="40" height="9" fill="#0000ff"/>
<rect x="672" y="460" width="40" height="3" fill="#ffffff"/>
<rect x="672" y="461" width="40" height="1" fill="#ececec"/>
<rect x="671" y="463" width="42" height="1" fill="#000"/>
<rect x="671" y="473" width="42" height="1" fill="#000"/>
<rect x="672" y="464" width="40" height="9" fill="#0000ff"/>
<rect x="672" y="475" width="40" height="1" fill="#ececec"/>
<rect x="671" y="141" width="1" height="333" fill="#000"/>
<rect x="712" y="141" width="1" height="333" fill="#000"/>
<circle cx="612.5" cy="202.3" r="4.6" fill="#000" shape-rendering="geometricPrecision"/>
<rect x="745.5" y="169.5" width="20" height="10" fill="#0000ff" stroke="#000" stroke-width="1"/>
<rect x="745.5" y="253.5" width="20" height="10" fill="#ffffff" stroke="#000" stroke-width="1"/>
<rect x="745.5" y="337.5" width="20" height="10" fill="#ffffff" stroke="#000" stroke-width="1"/>
<rect x="745.5" y="421.5" width="20" height="10" fill="#ffffff" stroke="#000" stroke-width="1"/>
<g transform="translate(652,93)">
<path d="M5 1 H11 L15 5 V11 L11 15 H5 L1 11 V5 Z" fill="#fff" shape-rendering="crispEdges"/>
<rect x="5" y="0" width="1" height="1" fill="#000"/>
<rect x="6" y="0" width="1" height="1" fill="#000"/>
<rect x="7" y="0" width="1" height="1" fill="#000"/>
<rect x="8" y="0" width="1" height="1" fill="#000"/>
<rect x="9" y="0" width="1" height="1" fill="#000"/>
<rect x="10" y="0" width="1" height="1" fill="#000"/>
<rect x="4" y="1" width="1" height="1" fill="#000"/>
<rect x="11" y="1" width="1" height="1" fill="#000"/>
<rect x="2" y="2" width="1" height="1" fill="#000"/>
<rect x="3" y="2" width="1" height="1" fill="#000"/>
<rect x="12" y="2" width="1" height="1" fill="#000"/>
<rect x="13" y="2" width="1" height="1" fill="#000"/>
<rect x="2" y="3" width="1" height="1" fill="#000"/>
<rect x="13" y="3" width="1" height="1" fill="#000"/>
<rect x="1" y="4" width="1" height="1" fill="#000"/>
<rect x="14" y="4" width="1" height="1" fill="#000"/>
<rect x="0" y="5" width="1" height="1" fill="#000"/>
<rect x="15" y="5" width="1" height="1" fill="#000"/>
<rect x="0" y="6" width="1" height="1" fill="#000"/>
<rect x="15" y="6" width="1" height="1" fill="#000"/>
<rect x="0" y="7" width="1" height="1" fill="#000"/>
<rect x="15" y="7" width="1" height="1" fill="#000"/>
<rect x="0" y="8" width="1" height="1" fill="#000"/>
<rect x="15" y="8" width="1" height="1" fill="#000"/>
<rect x="0" y="9" width="1" height="1" fill="#000"/>
<rect x="15" y="9" width="1" height="1" fill="#000"/>
<rect x="0" y="10" width="1" height="1" fill="#000"/>
<rect x="15" y="10" width="1" height="1" fill="#000"/>
<rect x="1" y="11" width="1" height="1" fill="#000"/>
<rect x="14" y="11" width="1" height="1" fill="#000"/>
<rect x="2" y="12" width="1" height="1" fill="#000"/>
<rect x="13" y="12" width="1" height="1" fill="#000"/>
<rect x="2" y="13" width="1" height="1" fill="#000"/>
<rect x="3" y="13" width="1" height="1" fill="#000"/>
<rect x="12" y="13" width="1" height="1" fill="#000"/>
<rect x="13" y="13" width="1" height="1" fill="#000"/>
<rect x="4" y="14" width="1" height="1" fill="#000"/>
<rect x="11" y="14" width="1" height="1" fill="#000"/>
<rect x="5" y="15" width="1" height="1" fill="#000"/>
<rect x="6" y="15" width="1" height="1" fill="#000"/>
<rect x="7" y="15" width="1" height="1" fill="#000"/>
<rect x="8" y="15" width="1" height="1" fill="#000"/>
<rect x="9" y="15" width="1" height="1" fill="#000"/>
<rect x="10" y="15" width="1" height="1" fill="#000"/>
<rect x="4" y="6" width="8" height="1" fill="#000"/>
<rect x="4" y="9" width="8" height="1" fill="#000"/>
<rect x="6" y="4" width="1" height="8" fill="#000"/>
<rect x="9" y="4" width="1" height="8" fill="#000"/>
<rect x="2" y="7" width="2" height="2" fill="#000"/>
<rect x="12" y="7" width="2" height="2" fill="#000"/>
<rect x="7" y="2" width="2" height="2" fill="#000"/>
<rect x="7" y="12" width="2" height="2" fill="#000"/>
</g>
<g transform="translate(652,483)">
<path d="M5 1 H11 L15 5 V11 L11 15 H5 L1 11 V5 Z" fill="#fff" shape-rendering="crispEdges"/>
<rect x="5" y="0" width="1" height="1" fill="#000"/>
<rect x="6" y="0" width="1" height="1" fill="#000"/>
<rect x="7" y="0" width="1" height="1" fill="#000"/>
<rect x="8" y="0" width="1" height="1" fill="#000"/>
<rect x="9" y="0" width="1" height="1" fill="#000"/>
<rect x="10" y="0" width="1" height="1" fill="#000"/>
<rect x="4" y="1" width="1" height="1" fill="#000"/>
<rect x="11" y="1" width="1" height="1" fill="#000"/>
<rect x="2" y="2" width="1" height="1" fill="#000"/>
<rect x="3" y="2" width="1" height="1" fill="#000"/>
<rect x="12" y="2" width="1" height="1" fill="#000"/>
<rect x="13" y="2" width="1" height="1" fill="#000"/>
<rect x="2" y="3" width="1" height="1" fill="#000"/>
<rect x="13" y="3" width="1" height="1" fill="#000"/>
<rect x="1" y="4" width="1" height="1" fill="#000"/>
<rect x="14" y="4" width="1" height="1" fill="#000"/>
<rect x="0" y="5" width="1" height="1" fill="#000"/>
<rect x="15" y="5" width="1" height="1" fill="#000"/>
<rect x="0" y="6" width="1" height="1" fill="#000"/>
<rect x="15" y="6" width="1" height="1" fill="#000"/>
<rect x="0" y="7" width="1" height="1" fill="#000"/>
<rect x="15" y="7" width="1" height="1" fill="#000"/>
<rect x="0" y="8" width="1" height="1" fill="#000"/>
<rect x="15" y="8" width="1" height="1" fill="#000"/>
<rect x="0" y="9" width="1" height="1" fill="#000"/>
<rect x="15" y="9" width="1" height="1" fill="#000"/>
<rect x="0" y="10" width="1" height="1" fill="#000"/>
<rect x="15" y="10" width="1" height="1" fill="#000"/>
<rect x="1" y="11" width="1" height="1" fill="#000"/>
<rect x="14" y="11" width="1" height="1" fill="#000"/>
<rect x="2" y="12" width="1" height="1" fill="#000"/>
<rect x="13" y="12" width="1" height="1" fill="#000"/>
<rect x="2" y="13" width="1" height="1" fill="#000"/>
<rect x="3" y="13" width="1" height="1" fill="#000"/>
<rect x="12" y="13" width="1" height="1" fill="#000"/>
<rect x="13" y="13" width="1" height="1" fill="#000"/>
<rect x="4" y="14" width="1" height="1" fill="#000"/>
<rect x="11" y="14" width="1" height="1" fill="#000"/>
<rect x="5" y="15" width="1" height="1" fill="#000"/>
<rect x="6" y="15" width="1" height="1" fill="#000"/>
<rect x="7" y="15" width="1" height="1" fill="#000"/>
<rect x="8" y="15" width="1" height="1" fill="#000"/>
<rect x="9" y="15" width="1" height="1" fill="#000"/>
<rect x="10" y="15" width="1" height="1" fill="#000"/>
<rect x="4" y="6" width="8" height="1" fill="#000"/>
<rect x="4" y="9" width="8" height="1" fill="#000"/>
<rect x="6" y="4" width="1" height="8" fill="#000"/>
<rect x="9" y="4" width="1" height="8" fill="#000"/>
<rect x="2" y="7" width="2" height="2" fill="#000"/>
<rect x="12" y="7" width="2" height="2" fill="#000"/>
<rect x="7" y="2" width="2" height="2" fill="#000"/>
<rect x="7" y="12" width="2" height="2" fill="#000"/>
</g>
<rect x="600" y="506" width="121" height="1" fill="#000"/>
<rect x="600" y="540" width="121" height="1" fill="#000"/>
<rect x="600" y="506" width="1" height="35" fill="#000"/>
<rect x="720" y="506" width="1" height="35" fill="#000"/>
<rect x="601" y="507" width="119" height="1" fill="#ffffff"/>
<rect x="601" y="507" width="1" height="33" fill="#ffffff"/>
<defs><g id="cell"><rect x="0" y="0" width="13" height="1" fill="#000"/><rect x="0" y="1" width="2" height="1" fill="#000"/><rect x="2" y="1" width="9" height="1" fill="#fff"/><rect x="11" y="1" width="2" height="1" fill="#000"/><rect x="0" y="2" width="1" height="1" fill="#000"/><rect x="1" y="2" width="1" height="1" fill="#fff"/><rect x="2" y="2" width="1" height="1" fill="#000"/><rect x="3" y="2" width="7" height="1" fill="#fff"/><rect x="10" y="2" width="1" height="1" fill="#000"/><rect x="11" y="2" width="1" height="1" fill="#fff"/><rect x="12" y="2" width="1" height="1" fill="#000"/><rect x="0" y="3" width="1" height="1" fill="#000"/><rect x="1" y="3" width="2" height="1" fill="#fff"/><rect x="3" y="3" width="7" height="1" fill="#000"/><rect x="10" y="3" width="2" height="1" fill="#fff"/><rect x="12" y="3" width="1" height="1" fill="#000"/><rect x="0" y="4" width="1" height="1" fill="#000"/><rect x="1" y="4" width="2" height="1" fill="#fff"/><rect x="3" y="4" width="1" height="1" fill="#000"/><rect x="4" y="4" width="5" height="1" fill="#fff"/><rect x="9" y="4" width="1" height="1" fill="#000"/><rect x="10" y="4" width="2" height="1" fill="#fff"/><rect x="12" y="4" width="1" height="1" fill="#000"/><rect x="0" y="5" width="1" height="1" fill="#000"/><rect x="1" y="5" width="2" height="1" fill="#fff"/><rect x="3" y="5" width="1" height="1" fill="#000"/><rect x="4" y="5" width="1" height="1" fill="#fff"/><rect x="5" y="5" width="3" height="1" fill="#f0f0f0"/><rect x="8" y="5" width="1" height="1" fill="#fff"/><rect x="9" y="5" width="1" height="1" fill="#000"/><rect x="10" y="5" width="2" height="1" fill="#fff"/><rect x="12" y="5" width="1" height="1" fill="#000"/><rect x="0" y="6" width="1" height="1" fill="#000"/><rect x="1" y="6" width="2" height="1" fill="#fff"/><rect x="3" y="6" width="1" height="1" fill="#000"/><rect x="4" y="6" width="1" height="1" fill="#fff"/><rect x="5" y="6" width="3" height="1" fill="#f0f0f0"/><rect x="8" y="6" width="1" height="1" fill="#fff"/><rect x="9" y="6" width="1" height="1" fill="#000"/><rect x="10" y="6" width="2" height="1" fill="#fff"/><rect x="12" y="6" width="1" height="1" fill="#000"/><rect x="0" y="7" width="1" height="1" fill="#000"/><rect x="1" y="7" width="2" height="1" fill="#fff"/><rect x="3" y="7" width="1" height="1" fill="#000"/><rect x="4" y="7" width="1" height="1" fill="#fff"/><rect x="5" y="7" width="3" height="1" fill="#f0f0f0"/><rect x="8" y="7" width="1" height="1" fill="#fff"/><rect x="9" y="7" width="1" height="1" fill="#000"/><rect x="10" y="7" width="2" height="1" fill="#fff"/><rect x="12" y="7" width="1" height="1" fill="#000"/><rect x="0" y="8" width="1" height="1" fill="#000"/><rect x="1" y="8" width="2" height="1" fill="#fff"/><rect x="3" y="8" width="1" height="1" fill="#000"/><rect x="4" y="8" width="5" height="1" fill="#fff"/><rect x="9" y="8" width="1" height="1" fill="#000"/><rect x="10" y="8" width="2" height="1" fill="#fff"/><rect x="12" y="8" width="1" height="1" fill="#000"/><rect x="0" y="9" width="1" height="1" fill="#000"/><rect x="1" y="9" width="2" height="1" fill="#fff"/><rect x="3" y="9" width="7" height="1" fill="#000"/><rect x="10" y="9" width="2" height="1" fill="#fff"/><rect x="12" y="9" width="1" height="1" fill="#000"/><rect x="0" y="10" width="1" height="1" fill="#000"/><rect x="1" y="10" width="1" height="1" fill="#fff"/><rect x="2" y="10" width="1" height="1" fill="#000"/><rect x="3" y="10" width="7" height="1" fill="#fff"/><rect x="10" y="10" width="1" height="1" fill="#000"/><rect x="11" y="10" width="1" height="1" fill="#fff"/><rect x="12" y="10" width="1" height="1" fill="#000"/><rect x="0" y="11" width="2" height="1" fill="#000"/><rect x="2" y="11" width="9" height="1" fill="#fff"/><rect x="11" y="11" width="2" height="1" fill="#000"/><rect x="0" y="12" width="13" height="1" fill="#000"/></g></defs>
<use href="#cell" x="605" y="510"/>
<use href="#cell" x="619" y="510"/>
<use href="#cell" x="633" y="510"/>
<use href="#cell" x="647" y="510"/>
<use href="#cell" x="661" y="510"/>
<use href="#cell" x="675" y="510"/>
<use href="#cell" x="689" y="510"/>
<use href="#cell" x="703" y="510"/>
<use href="#cell" x="605" y="524"/>
<use href="#cell" x="619" y="524"/>
<use href="#cell" x="633" y="524"/>
<use href="#cell" x="647" y="524"/>
<use href="#cell" x="661" y="524"/>
<use href="#cell" x="675" y="524"/>
<use href="#cell" x="689" y="524"/>
<use href="#cell" x="703" y="524"/>
<rect x="1" y="552" width="785" height="1" fill="#ffffff"/>
<rect x="3" y="555" width="575" height="1" fill="#a0a0a0"/>
<rect x="3" y="555" width="1" height="14" fill="#a0a0a0"/>
<rect x="3" y="569" width="576" height="1" fill="#ffffff"/>
<rect x="578" y="555" width="1" height="15" fill="#ffffff"/>
<rect x="5" y="557" width="571" height="12" fill="#008000"/>
<rect x="781" y="561" width="2" height="2" fill="#a0a0a0"/>
<rect x="777" y="565" width="2" height="2" fill="#a0a0a0"/>
<rect x="781" y="565" width="2" height="2" fill="#a0a0a0"/>
<rect x="773" y="569" width="2" height="2" fill="#a0a0a0"/>
<rect x="777" y="569" width="2" height="2" fill="#a0a0a0"/>
<rect x="781" y="569" width="2" height="2" fill="#a0a0a0"/>
<text id="title" x="31.41" y="21" font-size="12" textLength="148.00" lengthAdjust="spacingAndGlyphs" fill="#000">SVODprogrammer version 4</text>
<text id="m_file" x="16.45" y="49" font-size="12" textLength="19.51" lengthAdjust="spacingAndGlyphs" fill="#000">File</text>
<text id="m_setup" x="53.19" y="49" font-size="12" textLength="30.91" lengthAdjust="spacingAndGlyphs" fill="#000">Setup</text>
<text id="m_about" x="102.19" y="49" font-size="12" textLength="34.17" lengthAdjust="spacingAndGlyphs" fill="#000">About</text>
<text id="m_help" x="153.82" y="49" font-size="12" textLength="26.81" lengthAdjust="spacingAndGlyphs" fill="#000">Help</text>
<text id="m_add" x="253.64" y="49" font-size="12" textLength="91.91" lengthAdjust="spacingAndGlyphs" fill="#000">ADD NEW FLASH</text>
<text id="m_open" x="408.13" y="49" font-size="12" font-weight="bold" textLength="31.25" lengthAdjust="spacingAndGlyphs" fill="#000">Open</text>
<text id="m_save" x="456.83" y="49" font-size="12" font-weight="bold" textLength="28.48" lengthAdjust="spacingAndGlyphs" fill="#000">Save</text>
<text id="m_lang" x="724.49" y="49" font-size="12" textLength="53.06" lengthAdjust="spacingAndGlyphs" fill="#000">Language</text>
<text id="tab_msg" x="8.78" y="74" font-size="12" textLength="43.10" lengthAdjust="spacingAndGlyphs" fill="#000">Message</text>
<text id="tab_hex" x="63.84" y="76" font-size="12" textLength="53.93" lengthAdjust="spacingAndGlyphs" fill="#000">Hex Viewer</text>
<text id="L0" x="8.74" y="97" font-size="14" textLength="212.16" lengthAdjust="spacingAndGlyphs" fill="#000">Now plug power to the motherboard</text>
<text id="L1" x="8.77" y="113" font-size="14" textLength="93.40" lengthAdjust="spacingAndGlyphs" fill="#000">Device ID: 8227</text>
<text id="L2" x="8.71" y="129" font-size="14" textLength="112.59" lengthAdjust="spacingAndGlyphs" fill="#000">Device Revision: 2</text>
<text id="L3" x="8.50" y="145" font-size="14" textLength="117.55" lengthAdjust="spacingAndGlyphs" fill="#000">ITE series detected</text>
<text id="L4" x="8.78" y="161" font-size="14" textLength="149.94" lengthAdjust="spacingAndGlyphs" fill="#000">Flash ID Internal: FFFFFE</text>
<text id="L5" x="8.79" y="177" font-size="14" textLength="150.02" lengthAdjust="spacingAndGlyphs" fill="#000">Flash ID External: C22016</text>
<text id="L6" x="8.79" y="193" font-size="14" textLength="202.97" lengthAdjust="spacingAndGlyphs" fill="#000">External size flash: 0x4194304 byte</text>
<text id="L7" x="9.13" y="209" font-size="14" textLength="194.56" lengthAdjust="spacingAndGlyphs" fill="#000">Start reading: 21.04.2026 13:05:41</text>
<text id="L8" x="8.79" y="225" font-size="14" textLength="192.89" lengthAdjust="spacingAndGlyphs" fill="#000">End reading: 21.04.2026 13:05:43</text>
<text id="L9" x="8.74" y="241" font-size="14" textLength="56.11" lengthAdjust="spacingAndGlyphs" fill="#000">Read OK</text>
<text id="L10" x="8.79" y="257" font-size="14" textLength="65.24" lengthAdjust="spacingAndGlyphs" fill="#000">File size : 0</text>
<text id="L11" x="8.79" y="273" font-size="14" textLength="108.31" lengthAdjust="spacingAndGlyphs" fill="#000">Flash size :196608</text>
<text id="L12" x="9.13" y="289" font-size="14" textLength="181.65" lengthAdjust="spacingAndGlyphs" fill="#000">Start verify: 21.04.2026 13:05:43</text>
<text id="L13" x="8.80" y="305" font-size="14" textLength="191.16" lengthAdjust="spacingAndGlyphs" fill="#000">End verify in: 21.04.2026 13:05:44</text>
<text id="L14" x="9.49" y="321" font-size="14" textLength="54.87" lengthAdjust="spacingAndGlyphs" fill="#fff">Verify OK</text>
<text id="B0" x="502.90" y="103" font-size="12.5" font-weight="bold" textLength="30.48" lengthAdjust="spacingAndGlyphs" fill="#000">Read</text>
<text id="B1" x="500.21" y="132" font-size="12.5" font-weight="bold" textLength="33.29" lengthAdjust="spacingAndGlyphs" fill="#000">Verify</text>
<text id="B2" x="500.86" y="161" font-size="12.5" font-weight="bold" textLength="34.37" lengthAdjust="spacingAndGlyphs" fill="#000">Erase</text>
<text id="B3" x="482.92" y="190" font-size="12.5" font-weight="bold" textLength="65.77" lengthAdjust="spacingAndGlyphs" fill="#000">Blank check</text>
<text id="B4" x="501.94" y="219" font-size="12.5" font-weight="bold" textLength="31.49" lengthAdjust="spacingAndGlyphs" fill="#000">Write</text>
<text id="B5" x="494.83" y="248" font-size="12.5" font-weight="bold" textLength="45.88" lengthAdjust="spacingAndGlyphs" fill="#000">Read ID</text>
<text id="B6" x="489.25" y="277" font-size="12.5" font-weight="bold" textLength="58.26" lengthAdjust="spacingAndGlyphs" fill="#000">Config ITE</text>
<text id="kbd" x="484.13" y="301" font-size="12" textLength="22.90" lengthAdjust="spacingAndGlyphs" fill="#000">KBD</text>
<text id="i2c" x="534.99" y="301" font-size="12" textLength="18.59" lengthAdjust="spacingAndGlyphs" fill="#000">I2C</text>
<text id="copylog" x="492.18" y="321" font-size="12" textLength="48.08" lengthAdjust="spacingAndGlyphs" fill="#000">Copy Log</text>
<text id="info" x="13.99" y="356" font-size="12" textLength="19.73" lengthAdjust="spacingAndGlyphs" fill="#000">Info</text>
<text id="power" x="12.86" y="377" font-size="12" textLength="34.46" lengthAdjust="spacingAndGlyphs" fill="#000">Power:</text>
<text id="v0" x="68.92" y="377" font-size="12" textLength="23.61" lengthAdjust="spacingAndGlyphs" fill="#000">OFF</text>
<text id="v1" x="120.86" y="377" font-size="12" textLength="26.15" lengthAdjust="spacingAndGlyphs" fill="#000">1.2 V</text>
<text id="v2" x="177.06" y="377" font-size="12" textLength="25.69" lengthAdjust="spacingAndGlyphs" fill="#000">1.8 V</text>
<text id="v3" x="232.04" y="377" font-size="12" textLength="26.62" lengthAdjust="spacingAndGlyphs" fill="#000">2.5 V</text>
<text id="v4" x="288.22" y="377" font-size="12" textLength="26.53" lengthAdjust="spacingAndGlyphs" fill="#000">2.7 V</text>
<text id="v5" x="344.50" y="377" font-size="12" textLength="26.33" lengthAdjust="spacingAndGlyphs" fill="#000">2.8 V</text>
<text id="v6" x="400.39" y="377" font-size="12" textLength="26.13" lengthAdjust="spacingAndGlyphs" fill="#000">3.0 V</text>
<text id="v7" x="456.00" y="377" font-size="12" textLength="26.75" lengthAdjust="spacingAndGlyphs" fill="#000">3.3 V</text>
<text id="autover" x="512.06" y="377" font-size="12" textLength="52.65" lengthAdjust="spacingAndGlyphs" fill="#000">Auto verify</text>
<text id="chkpins" x="31.43" y="404" font-size="12" textLength="98.42" lengthAdjust="spacingAndGlyphs" fill="#000">Check pins connect</text>
<text id="quad" x="370.71" y="404" font-size="12" textLength="32.40" lengthAdjust="spacingAndGlyphs" fill="#000">QUAD</text>
<text id="manu" x="12.68" y="434" font-size="12" textLength="68.44" lengthAdjust="spacingAndGlyphs" fill="#000">Manufacturer:</text>
<text id="type" x="13.23" y="458" font-size="12" textLength="55.06" lengthAdjust="spacingAndGlyphs" fill="#000">Type: 8227</text>
<text id="size" x="12.84" y="477" font-size="12" textLength="59.83" lengthAdjust="spacingAndGlyphs" fill="#000">Size: 192Kb</text>
<text id="fpath" x="12.68" y="498" font-size="12" textLength="47.17" lengthAdjust="spacingAndGlyphs" fill="#000">File path:</text>
<text id="aw" x="426.06" y="411" font-size="12" textLength="50.97" lengthAdjust="spacingAndGlyphs" fill="#000">Auto Write</text>
<text id="aw_erase" x="439.59" y="432" font-size="12" textLength="29.58" lengthAdjust="spacingAndGlyphs" fill="#000">Erase</text>
<text id="aw_ext" x="510.75" y="432" font-size="12" textLength="41.05" lengthAdjust="spacingAndGlyphs" fill="#000">External</text>
<text id="aw_blank" x="439.46" y="455" font-size="12" textLength="61.62" lengthAdjust="spacingAndGlyphs" fill="#000">Blank check</text>
<text id="aw_verify" x="440.22" y="478" font-size="12" textLength="27.97" lengthAdjust="spacingAndGlyphs" fill="#000">Verify</text>
<text id="mode" x="426.11" y="498" font-size="12" textLength="103.04" lengthAdjust="spacingAndGlyphs" fill="#000">Mode of programmer</text>
<text id="ite" x="425.47" y="520" font-size="12" textLength="17.72" lengthAdjust="spacingAndGlyphs" fill="#000">ITE</text>
<text id="zif" x="598.28" y="85" font-size="12" textLength="33.72" lengthAdjust="spacingAndGlyphs" fill="#000">ZIF 48</text>
<text id="pct" x="582.81" y="568" font-size="12" textLength="28.37" lengthAdjust="spacingAndGlyphs" fill="#000">100%</text>
</svg>
</body></html>
